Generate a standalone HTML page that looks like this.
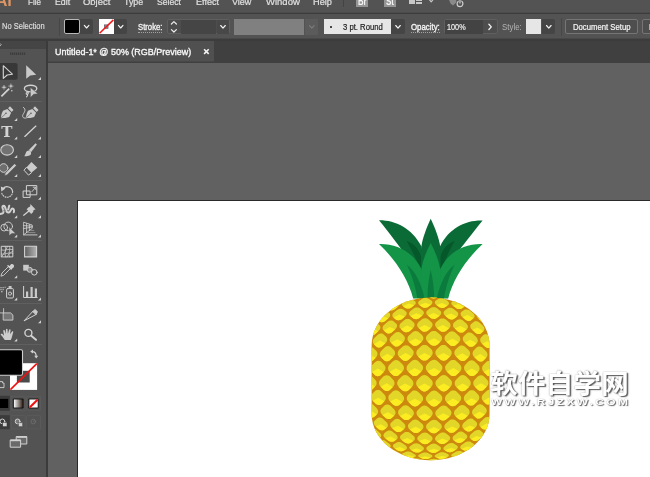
<!DOCTYPE html>
<html lang="en"><head><meta charset="utf-8"><title>Untitled-1* @ 50% (RGB/Preview)</title>
<style>
*{margin:0;padding:0;box-sizing:border-box}
html,body{width:650px;height:477px;overflow:hidden;background:#535353}
body{font-family:"Liberation Sans",sans-serif;position:relative}
#app{position:absolute;left:0;top:0;width:650px;height:477px;overflow:hidden;background:#535353}
.t{position:absolute;white-space:nowrap;transform-origin:0 0;line-height:normal;display:block}
.abs{position:absolute}
.ddn{position:absolute;background:#454545;border-radius:0 2px 2px 0}
svg{position:absolute;left:0;top:0;overflow:visible}
</style></head>
<body>
<div id="app">
<div class="abs" style="left:0;top:0;width:650px;height:13px;background:#535353"></div>
<span class="t" style="left:-4.6px;top:-9px;font-size:16.5px;font-weight:bold;color:#de9563;opacity:.999">Ai</span>
<span class="t" style="left:28.00px;top:-4.00px;font-size:9.4px;color:#e0e0e0;transform:scaleX(0.8583);-webkit-text-stroke:0.2px currentColor;">File</span>
<span class="t" style="left:55.00px;top:-4.00px;font-size:9.4px;color:#e0e0e0;transform:scaleX(0.9384);-webkit-text-stroke:0.2px currentColor;">Edit</span>
<span class="t" style="left:83.40px;top:-4.00px;font-size:9.4px;color:#e0e0e0;transform:scaleX(1.0086);-webkit-text-stroke:0.2px currentColor;">Object</span>
<span class="t" style="left:124.40px;top:-4.00px;font-size:9.4px;color:#e0e0e0;transform:scaleX(0.9422);-webkit-text-stroke:0.2px currentColor;">Type</span>
<span class="t" style="left:157.00px;top:-4.00px;font-size:9.4px;color:#e0e0e0;transform:scaleX(0.9187);-webkit-text-stroke:0.2px currentColor;">Select</span>
<span class="t" style="left:195.80px;top:-4.00px;font-size:9.4px;color:#e0e0e0;transform:scaleX(0.9723);-webkit-text-stroke:0.2px currentColor;">Effect</span>
<span class="t" style="left:232.00px;top:-4.00px;font-size:9.4px;color:#e0e0e0;transform:scaleX(0.9602);-webkit-text-stroke:0.2px currentColor;">View</span>
<span class="t" style="left:265.80px;top:-4.00px;font-size:9.4px;color:#e0e0e0;transform:scaleX(1.0140);-webkit-text-stroke:0.2px currentColor;">Window</span>
<span class="t" style="left:313.20px;top:-4.00px;font-size:9.4px;color:#e0e0e0;transform:scaleX(0.9828);-webkit-text-stroke:0.2px currentColor;">Help</span>
<div class="abs" style="left:342.5px;top:0;width:1px;height:7px;background:#444"></div>
<div class="abs" style="left:355.6px;top:-5px;width:12.5px;height:12.2px;background:#959595"></div>
<span class="t" style="left:357.60px;top:-5.00px;font-size:10.5px;color:#f4f4f4;font-weight:bold;transform:scaleX(0.7369);">Br</span>
<div class="abs" style="left:383.8px;top:-5px;width:12.4px;height:12.2px;background:#959595"></div>
<span class="t" style="left:386.20px;top:-5.00px;font-size:10.5px;color:#f4f4f4;font-weight:bold;transform:scaleX(0.7619);">St</span>
<div class="abs" style="left:409px;top:-3px;width:5.8px;height:7.3px;background:#c8c8c8"></div>
<div class="abs" style="left:415.9px;top:-3px;width:6px;height:4px;background:#c8c8c8"></div>
<div class="abs" style="left:415.9px;top:1.8px;width:6px;height:2.5px;background:#c8c8c8"></div>
<div class="abs" style="left:0;top:12px;width:650px;height:3px;background:#4b4b4b"></div><div class="abs" style="left:0;top:13px;width:650px;height:1px;background:#3c3c3c"></div>
<div class="abs" style="left:0;top:14px;width:650px;height:25px;background:#535353"></div>
<span class="t" style="left:2.20px;top:21.00px;font-size:9.0px;color:#dcdcdc;transform:scaleX(0.8348);-webkit-text-stroke:0.2px currentColor;">No Selection</span>
<div class="abs" style="left:59.4px;top:17.5px;width:1px;height:18.5px;background:#474747"></div>
<div class="abs" style="left:64.2px;top:18.8px;width:15.8px;height:15.6px;background:#000;border:1px solid #b8b8b8;border-radius:2px"></div>
<div class="ddn" style="left:80.4px;top:19.3px;width:12.2px;height:14.6px"></div>
<div class="abs" style="left:99px;top:19.3px;width:15px;height:14.6px;background:#fff"></div>
<div class="ddn" style="left:114.2px;top:19.3px;width:12.8px;height:14.6px"></div>
<span class="t" style="left:137.60px;top:22.00px;font-size:9.0px;color:#f4f4f4;transform:scaleX(0.8558);-webkit-text-stroke:0.35px currentColor;">Stroke:</span>
<div class="abs" style="left:137.6px;top:32px;width:24.4px;height:0;border-top:1px dotted #a2a2a2"></div>
<div class="abs" style="left:166.6px;top:19px;width:63.4px;height:15.4px;border:1px solid #5f5f5f;border-radius:2px;background:#4d4d4d"></div>
<div class="abs" style="left:181.2px;top:19.8px;width:34.4px;height:13.8px;background:#454545"></div>
<div class="abs" style="left:216.6px;top:19.8px;width:12.6px;height:13.8px;background:#484848"></div>
<div class="abs" style="left:234.3px;top:18.9px;width:70px;height:15.9px;background:#808080"></div>
<div class="abs" style="left:305.2px;top:18.9px;width:13.2px;height:15.9px;background:#5b5b5b"></div>
<div class="abs" style="left:323.8px;top:19.2px;width:67px;height:15.1px;background:#e6e6e6"></div>
<div class="abs" style="left:329.7px;top:25.6px;width:2.8px;height:2.8px;border-radius:50%;background:#111"></div>
<span class="t" style="left:342.90px;top:22.00px;font-size:9.0px;color:#1c1c1c;transform:scaleX(0.8554);-webkit-text-stroke:0.2px currentColor;">3 pt. Round</span>
<div class="ddn" style="left:391.4px;top:19.2px;width:13.2px;height:15.1px"></div>
<span class="t" style="left:410.80px;top:22.00px;font-size:9.0px;color:#f4f4f4;transform:scaleX(0.8725);-webkit-text-stroke:0.35px currentColor;">Opacity:</span>
<div class="abs" style="left:410.8px;top:32px;width:28.8px;height:0;border-top:1px dotted #a2a2a2"></div>
<div class="abs" style="left:444px;top:19px;width:53.6px;height:15.4px;border:1px solid #5f5f5f;border-radius:2px;background:#4d4d4d"></div>
<div class="abs" style="left:444.8px;top:19.8px;width:38.4px;height:13.8px;background:#434343"></div>
<span class="t" style="left:447.10px;top:22.00px;font-size:9.0px;color:#f0f0f0;transform:scaleX(0.8081);-webkit-text-stroke:0.2px currentColor;">100%</span>
<span class="t" style="left:501.80px;top:22.00px;font-size:9.0px;color:#b4b4b4;transform:scaleX(0.8752);">Style:</span>
<div class="abs" style="left:526.2px;top:19.3px;width:15.2px;height:14.8px;background:#e6e6e6"></div>
<div class="ddn" style="left:542px;top:19.3px;width:13.4px;height:14.8px"></div>
<div class="abs" style="left:560.5px;top:17.5px;width:1px;height:18.5px;background:#474747"></div>
<div class="abs" style="left:565px;top:19.2px;width:72.8px;height:15.1px;border:1px solid #757575;border-radius:2px;background:#4e4e4e"></div>
<span class="t" style="left:572.80px;top:22.00px;font-size:9.0px;color:#f6f6f6;transform:scaleX(0.8578);-webkit-text-stroke:0.2px currentColor;">Document Setup</span>
<div class="abs" style="left:641.8px;top:19.2px;width:62px;height:15.1px;border:1px solid #757575;border-radius:2px;background:#4e4e4e"></div>
<span class="t" style="left:648.60px;top:22.00px;font-size:9.0px;color:#f6f6f6;transform:scaleX(0.8578);-webkit-text-stroke:0.2px currentColor;">Preferences</span>
<svg width="650" height="477" viewBox="0 0 650 477"><path d="M84.3,25.4 L86.6,28.0 L88.89999999999999,25.4" fill="none" stroke="#f4f4f4" stroke-width="1.15" stroke-linecap="round" stroke-linejoin="round"/><path d="M118.4,25.4 L120.7,28.0 L123.0,25.4" fill="none" stroke="#f4f4f4" stroke-width="1.15" stroke-linecap="round" stroke-linejoin="round"/><path d="M220.7,25.5 L223,28.1 L225.3,25.5" fill="none" stroke="#f4f4f4" stroke-width="1.15" stroke-linecap="round" stroke-linejoin="round"/><path d="M309.5,25.599999999999998 L311.8,28.2 L314.1,25.599999999999998" fill="none" stroke="#7c7c7c" stroke-width="1.15" stroke-linecap="round" stroke-linejoin="round"/><path d="M395.7,25.5 L398,28.1 L400.3,25.5" fill="none" stroke="#f4f4f4" stroke-width="1.15" stroke-linecap="round" stroke-linejoin="round"/><path d="M546.5,25.5 L548.8,28.1 L551.0999999999999,25.5" fill="none" stroke="#f4f4f4" stroke-width="1.15" stroke-linecap="round" stroke-linejoin="round"/><path d="M429.2,-0.6 L431.2,1.7999999999999998 L433.2,-0.6" fill="none" stroke="#c8c8c8" stroke-width="1.15" stroke-linecap="round" stroke-linejoin="round"/><path d="M171.4,24 L173.9,21.6 L176.4,24 M171.4,29.6 L173.9,32 L176.4,29.6" fill="none" stroke="#ececec" stroke-width="1.2" stroke-linecap="round" stroke-linejoin="round"/><path d="M488.9,24.3 L491.3,26.9 L488.9,29.5" fill="none" stroke="#f4f4f4" stroke-width="1.3" stroke-linecap="round" stroke-linejoin="round"/><rect x="104.6" y="24.9" width="3.4" height="3.4" fill="#8a98a8" stroke="#4c5560" stroke-width="0.7"/><path d="M99.6,33.3 L113.4,19.9" stroke="#f01818" stroke-width="1.5"/><circle cx="460" cy="3.8" r="2.9" fill="none" stroke="#cdcdcd" stroke-width="1.2"/><path d="M460,-1 L460,3.4" stroke="#535353" stroke-width="2.6"/><path d="M460,-1 L460,3.4" stroke="#cdcdcd" stroke-width="1.2"/><path d="M448.6,-1 L456.4,-1 L456.2,2.6 L453,5.4 L450.6,3.6 Z" fill="#8a8a8a"/></svg>
<div class="abs" style="left:0;top:38px;width:650px;height:1px;background:#484848"></div><div class="abs" style="left:0;top:39px;width:650px;height:2px;background:#3c3c3c"></div>
<div class="abs" style="left:48px;top:41px;width:602px;height:22px;background:#404040"></div>
<div class="abs" style="left:48px;top:41px;width:166px;height:21px;background:linear-gradient(#505050 0,#505050 20px,#474747 20px)"></div>
<span class="t" style="left:55.20px;top:47.00px;font-size:9.2px;color:#f8f8f8;transform:scaleX(0.9756);-webkit-text-stroke:0.35px currentColor;">Untitled-1* @ 50% (RGB/Preview)</span>
<svg width="650" height="477" viewBox="0 0 650 477"><path d="M204.1,49.3 L208.7,53.9 M208.7,49.3 L204.1,53.9" stroke="#f4f4f4" stroke-width="1.6"/></svg>
<div class="abs" style="left:48px;top:63px;width:602px;height:414px;background:#616161"></div>
<div class="abs" style="left:76.9px;top:199.5px;width:580px;height:290px;background:#2a2a2a"></div>
<div class="abs" style="left:78.1px;top:200.8px;width:580px;height:290px;background:#fff"></div>
<svg width="650" height="477" viewBox="0 0 650 477"><defs><clipPath id="bodyclip"><path d="M371.6,345.9 C371.6,318.93 397.80,297.4 430.6,297.4 C463.40,297.4 489.6,318.93 489.6,345.9 L489.6,413.7 C489.6,439.55 463.40,460.2 430.6,460.2 C397.80,460.2 371.6,439.55 371.6,413.7 Z"/></clipPath></defs>
<path fill="#0b6b36" d="M379,220.2 C395,220 412,228 421.5,246.5 L424,262 L428,298 L414,298 L403.5,252 C400,247 390,234 379,220.2Z"/>
<path fill="#0b6b36" d="M482.6,220.6 C466,220 449,228 440,246.5 L437.5,262 L433.5,298 L447.6,298 L458.1,252 C461.6,247 471.6,234.4 482.6,220.6Z"/>
<path fill="#04582a" d="M406.4,240.8 C415.5,244 422.6,252 422.8,268.5 L423.5,277 C419,264 411.5,250 406.9,241.3Z"/>
<path fill="#04582a" d="M455,240.8 C446,244 438.9,252 438.7,268.5 L438,277 C442.5,264 450,250 454.5,241.3Z"/>
<path fill="#0b6b36" d="M430.7,218.8 C435,228 439,238 440.3,247 L441,298 L420.5,298 L421.3,247 C422.5,238 426.5,228 430.7,218.8Z"/>
<path fill="#139447" d="M379,244 C397,243.5 413,252 421.5,269 L428,298.6 L413.2,298.6 C408,278 394,258 379,244Z"/>
<path fill="#139447" d="M482.6,244 C464,243.5 448.5,252 440.2,269 L433.5,298.6 L448.2,298.6 C453.2,278 467.5,258 482.6,244Z"/>
<path fill="#139447" d="M430.7,243 C435.5,252 439,261 440.3,270 L442,298.6 L419.5,298.6 L421.3,270 C422.5,261 426,252 430.7,243Z"/>
<path fill="#0b7b3d" d="M406.8,264.8 C415,271 421,282 424.6,298.6 L417.3,298.6 C415.5,286 411.5,274 406.8,264.8Z"/>
<path fill="#0b7b3d" d="M454.6,264.8 C446.5,271 440.5,282 436.8,298.6 L444,298.6 C446,286 450,274 454.6,264.8Z"/>
<path fill="#0b7b3d" d="M430.7,270 C433,279 434,289 434.2,298.6 L427.4,298.6 C427.5,289 428.5,279 430.7,270Z"/>
<path d="M371.6,345.9 C371.6,318.93 397.80,297.4 430.6,297.4 C463.40,297.4 489.6,318.93 489.6,345.9 L489.6,413.7 C489.6,439.55 463.40,460.2 430.6,460.2 C397.80,460.2 371.6,439.55 371.6,413.7 Z" fill="#cd890e"/>
<g clip-path="url(#bodyclip)"><path fill="#e2d728" d="M380.6,292.0 L381.1,292.0 L381.4,292.0 L381.5,292.1 L381.3,292.4 L380.9,292.7 L380.3,293.0 L377.9,294.4 L377.2,294.8 L376.3,295.2 L375.5,295.6 L374.6,295.9 L373.9,296.1 L373.3,296.2 L371.5,296.5 L371.0,296.6 L370.8,296.5 L370.8,296.4 L370.9,296.2 L371.3,295.9 L371.8,295.6 L374.0,294.4 L374.6,294.0 L375.4,293.7 L376.3,293.4 L377.1,293.0 L377.9,292.7 L378.5,292.5ZM493.6,297.6 L494.1,298.0 L494.4,298.3 L494.6,298.5 L494.6,298.6 L494.4,298.6 L494.0,298.5 L492.2,298.1 L491.7,298.0 L491.0,297.8 L490.2,297.4 L489.3,297.0 L488.5,296.6 L487.8,296.2 L485.5,294.7 L484.9,294.3 L484.5,294.0 L484.4,293.8 L484.4,293.7 L484.7,293.7 L485.2,293.8 L487.1,294.3 L487.8,294.6 L488.5,294.9 L489.3,295.2 L490.1,295.6 L490.9,296.0 L491.5,296.4ZM373.3,297.2 L373.8,297.2 L374.0,297.4 L374.0,297.7 L373.7,298.1 L373.3,298.6 L372.7,299.1 L370.2,301.0 L369.4,301.5 L368.6,302.0 L367.7,302.4 L367.0,302.7 L366.3,302.9 L365.7,302.9 L364.2,302.9 L363.8,302.8 L363.7,302.7 L363.7,302.4 L364.0,302.0 L364.4,301.5 L365.0,301.0 L367.2,299.3 L367.9,298.9 L368.7,298.4 L369.5,298.0 L370.2,297.7 L371.0,297.4 L371.5,297.3ZM386.4,292.8 L386.9,292.9 L387.2,293.2 L387.3,293.5 L387.0,293.9 L386.6,294.4 L385.9,294.9 L383.3,296.6 L382.5,297.1 L381.6,297.5 L380.6,297.8 L379.7,298.0 L378.9,298.1 L378.3,298.1 L376.4,297.8 L376.0,297.6 L375.7,297.4 L375.7,297.1 L376.0,296.7 L376.4,296.2 L377.0,295.8 L379.5,294.2 L380.2,293.8 L381.1,293.4 L382.0,293.1 L382.9,292.9 L383.7,292.7 L384.3,292.7ZM488.7,297.5 L489.3,298.0 L489.7,298.4 L490.0,298.8 L490.0,299.1 L489.8,299.4 L489.4,299.5 L487.6,299.7 L487.0,299.7 L486.3,299.6 L485.4,299.4 L484.5,299.0 L483.6,298.5 L482.8,298.0 L480.2,296.3 L479.6,295.8 L479.1,295.3 L478.9,294.9 L478.9,294.5 L479.2,294.3 L479.6,294.2 L481.6,294.2 L482.3,294.3 L483.1,294.4 L483.9,294.7 L484.8,295.1 L485.6,295.5 L486.3,295.9ZM378.2,299.8 L378.7,300.1 L378.9,300.5 L378.9,301.0 L378.6,301.6 L378.1,302.2 L377.4,302.8 L374.6,305.0 L373.8,305.6 L372.9,306.1 L372.0,306.5 L371.1,306.7 L370.3,306.7 L369.8,306.6 L368.0,305.9 L367.7,305.7 L367.5,305.3 L367.6,304.8 L367.9,304.2 L368.4,303.6 L369.0,303.1 L371.6,301.0 L372.4,300.5 L373.2,300.0 L374.1,299.7 L375.0,299.4 L375.7,299.3 L376.3,299.3ZM392.4,296.3 L392.9,296.6 L393.2,297.1 L393.2,297.6 L392.9,298.2 L392.5,298.8 L391.7,299.4 L388.9,301.5 L388.0,302.0 L387.0,302.5 L386.0,302.8 L385.1,302.9 L384.2,302.9 L383.5,302.7 L381.5,301.7 L381.0,301.4 L380.8,301.0 L380.8,300.4 L381.1,299.9 L381.5,299.3 L382.2,298.7 L384.9,296.8 L385.8,296.3 L386.7,295.9 L387.6,295.6 L388.6,295.5 L389.4,295.4 L390.2,295.6ZM407.5,294.0 L408.1,294.4 L408.4,294.8 L408.5,295.4 L408.3,296.0 L407.8,296.6 L407.1,297.2 L404.2,299.1 L403.3,299.6 L402.3,300.0 L401.2,300.2 L400.2,300.3 L399.3,300.1 L398.5,299.8 L396.1,298.6 L395.6,298.3 L395.3,297.8 L395.3,297.2 L395.5,296.6 L396.0,296.1 L396.7,295.5 L399.5,293.8 L400.3,293.4 L401.3,293.0 L402.3,292.8 L403.3,292.7 L404.2,292.8 L405.0,293.0ZM423.2,292.8 L423.8,293.3 L424.2,293.8 L424.4,294.4 L424.2,295.0 L423.8,295.5 L423.1,296.1 L420.3,297.8 L419.4,298.3 L418.3,298.6 L417.2,298.7 L416.1,298.7 L415.1,298.5 L414.3,298.2 L411.7,296.7 L411.1,296.3 L410.8,295.8 L410.7,295.2 L410.9,294.6 L411.3,294.0 L412.0,293.5 L414.8,292.0 L415.7,291.6 L416.7,291.3 L417.7,291.2 L418.8,291.2 L419.7,291.3 L420.6,291.6ZM439.1,292.9 L439.8,293.4 L440.2,293.9 L440.4,294.5 L440.3,295.1 L439.9,295.6 L439.2,296.1 L436.5,297.7 L435.7,298.1 L434.7,298.3 L433.6,298.4 L432.4,298.3 L431.4,298.0 L430.5,297.6 L427.8,296.0 L427.1,295.5 L426.7,294.9 L426.6,294.3 L426.7,293.7 L427.2,293.2 L427.8,292.7 L430.5,291.4 L431.4,291.1 L432.4,290.9 L433.4,290.8 L434.5,290.9 L435.5,291.1 L436.4,291.4ZM454.8,294.1 L455.5,294.6 L456.0,295.2 L456.2,295.8 L456.1,296.4 L455.8,296.9 L455.2,297.3 L452.7,298.6 L451.9,299.0 L450.9,299.1 L449.8,299.1 L448.7,299.0 L447.7,298.6 L446.8,298.2 L443.9,296.3 L443.2,295.8 L442.8,295.2 L442.6,294.6 L442.7,294.0 L443.1,293.5 L443.7,293.1 L446.3,292.0 L447.1,291.7 L448.1,291.6 L449.1,291.6 L450.2,291.8 L451.1,292.1 L452.0,292.5ZM469.9,296.5 L470.5,297.1 L471.0,297.7 L471.3,298.2 L471.3,298.8 L471.0,299.3 L470.5,299.6 L468.2,300.7 L467.5,301.0 L466.6,301.1 L465.6,301.0 L464.5,300.8 L463.5,300.4 L462.6,299.8 L459.7,297.9 L459.0,297.3 L458.5,296.7 L458.3,296.1 L458.4,295.5 L458.7,295.0 L459.3,294.7 L461.6,293.8 L462.4,293.6 L463.3,293.6 L464.3,293.7 L465.3,293.9 L466.3,294.3 L467.1,294.7ZM483.9,300.1 L484.6,300.7 L485.1,301.3 L485.3,301.9 L485.4,302.4 L485.2,302.8 L484.7,303.1 L482.8,303.9 L482.2,304.1 L481.3,304.1 L480.4,304.0 L479.4,303.7 L478.5,303.2 L477.6,302.6 L474.8,300.5 L474.1,299.9 L473.6,299.3 L473.3,298.7 L473.3,298.2 L473.6,297.7 L474.1,297.5 L476.2,296.8 L476.9,296.7 L477.7,296.7 L478.6,296.9 L479.5,297.3 L480.4,297.7 L481.2,298.2ZM496.5,304.9 L497.2,305.5 L497.7,306.1 L498.0,306.7 L498.1,307.1 L497.9,307.5 L497.6,307.7 L496.0,308.3 L495.5,308.4 L494.8,308.3 L494.0,308.1 L493.1,307.7 L492.2,307.2 L491.4,306.5 L488.7,304.3 L488.0,303.7 L487.5,303.0 L487.2,302.5 L487.1,302.0 L487.3,301.6 L487.7,301.4 L489.5,301.0 L490.1,301.0 L490.8,301.1 L491.6,301.4 L492.5,301.8 L493.3,302.3 L494.1,302.9ZM383.5,305.2 L383.9,305.6 L384.2,306.2 L384.2,306.9 L383.9,307.6 L383.3,308.4 L382.6,309.2 L379.6,311.6 L378.7,312.3 L377.7,312.8 L376.7,313.1 L375.8,313.2 L374.9,313.1 L374.3,312.8 L372.4,311.6 L371.9,311.1 L371.8,310.6 L371.8,309.9 L372.1,309.2 L372.7,308.4 L373.4,307.7 L376.2,305.4 L377.0,304.8 L378.0,304.4 L378.9,304.0 L379.9,303.9 L380.7,303.9 L381.4,304.1ZM398.7,302.5 L399.2,303.0 L399.6,303.6 L399.6,304.4 L399.3,305.2 L398.8,305.9 L398.1,306.6 L395.1,309.0 L394.1,309.6 L393.1,310.1 L392.0,310.3 L391.0,310.4 L390.0,310.2 L389.3,309.9 L387.0,308.3 L386.5,307.8 L386.2,307.2 L386.2,306.5 L386.5,305.7 L387.0,305.0 L387.8,304.3 L390.7,302.1 L391.6,301.6 L392.6,301.1 L393.6,300.9 L394.6,300.8 L395.5,300.9 L396.3,301.2ZM414.7,300.9 L415.3,301.5 L415.7,302.2 L415.8,302.9 L415.6,303.7 L415.2,304.5 L414.4,305.1 L411.4,307.4 L410.5,308.0 L409.4,308.4 L408.3,308.6 L407.2,308.5 L406.2,308.3 L405.3,307.9 L402.8,306.1 L402.2,305.5 L401.9,304.9 L401.8,304.1 L402.0,303.3 L402.5,302.6 L403.3,302.0 L406.2,299.9 L407.1,299.4 L408.1,299.0 L409.2,298.8 L410.3,298.8 L411.3,299.0 L412.1,299.4ZM431.2,300.4 L431.9,301.0 L432.3,301.7 L432.4,302.5 L432.3,303.3 L431.9,304.0 L431.2,304.7 L428.3,306.7 L427.4,307.3 L426.3,307.6 L425.2,307.7 L424.0,307.7 L423.0,307.4 L422.1,306.9 L419.3,304.9 L418.6,304.3 L418.2,303.6 L418.1,302.8 L418.3,302.0 L418.8,301.3 L419.5,300.7 L422.4,298.8 L423.2,298.3 L424.3,298.0 L425.4,297.9 L426.5,298.0 L427.5,298.2 L428.4,298.7ZM447.6,301.0 L448.3,301.7 L448.8,302.4 L449.0,303.1 L448.9,303.9 L448.6,304.6 L447.9,305.2 L445.2,307.1 L444.3,307.6 L443.3,307.9 L442.2,307.9 L441.0,307.8 L439.9,307.4 L439.0,306.9 L436.1,304.7 L435.4,304.1 L434.9,303.3 L434.8,302.5 L434.9,301.8 L435.3,301.1 L436.0,300.5 L438.7,298.8 L439.6,298.4 L440.6,298.2 L441.7,298.1 L442.8,298.3 L443.8,298.6 L444.7,299.1ZM463.6,302.7 L464.4,303.3 L464.9,304.1 L465.1,304.8 L465.1,305.6 L464.8,306.2 L464.2,306.8 L461.8,308.5 L460.9,308.9 L460.0,309.1 L458.9,309.1 L457.8,308.9 L456.7,308.4 L455.7,307.8 L452.7,305.6 L452.0,304.9 L451.5,304.1 L451.3,303.3 L451.4,302.6 L451.7,301.9 L452.3,301.4 L454.9,299.9 L455.7,299.6 L456.7,299.4 L457.7,299.4 L458.8,299.7 L459.8,300.0 L460.7,300.6ZM478.8,305.4 L479.5,306.1 L480.0,306.8 L480.3,307.6 L480.3,308.3 L480.1,308.9 L479.6,309.4 L477.5,310.8 L476.8,311.2 L475.9,311.3 L474.8,311.2 L473.8,310.9 L472.7,310.5 L471.8,309.8 L468.8,307.4 L468.1,306.7 L467.6,305.9 L467.3,305.2 L467.3,304.4 L467.6,303.8 L468.1,303.4 L470.4,302.1 L471.1,301.8 L472.0,301.8 L473.0,301.9 L474.0,302.2 L475.0,302.6 L475.9,303.2ZM492.7,309.2 L493.4,309.9 L493.9,310.7 L494.2,311.4 L494.3,312.0 L494.2,312.6 L493.8,313.0 L492.0,314.2 L491.4,314.4 L490.6,314.5 L489.7,314.3 L488.7,314.0 L487.7,313.5 L486.8,312.8 L483.9,310.3 L483.2,309.6 L482.6,308.8 L482.3,308.1 L482.3,307.4 L482.5,306.8 L483.0,306.4 L484.9,305.4 L485.5,305.2 L486.3,305.2 L487.2,305.4 L488.2,305.8 L489.1,306.3 L489.9,306.9ZM374.1,315.9 L374.5,316.5 L374.7,317.2 L374.7,318.0 L374.4,318.9 L373.8,319.7 L373.0,320.6 L370.0,323.3 L369.1,324.1 L368.1,324.6 L367.1,324.9 L366.2,325.0 L365.4,324.9 L364.7,324.5 L362.9,322.9 L362.5,322.4 L362.4,321.8 L362.5,321.0 L362.8,320.1 L363.4,319.3 L364.1,318.5 L367.0,315.9 L367.8,315.2 L368.8,314.6 L369.7,314.3 L370.7,314.1 L371.5,314.2 L372.1,314.5ZM389.3,313.1 L389.9,313.7 L390.1,314.5 L390.2,315.3 L389.9,316.3 L389.3,317.2 L388.6,318.0 L385.5,320.7 L384.5,321.4 L383.4,321.9 L382.3,322.2 L381.3,322.2 L380.4,322.0 L379.6,321.6 L377.4,319.7 L376.9,319.1 L376.7,318.4 L376.7,317.6 L377.1,316.7 L377.6,315.8 L378.4,315.0 L381.4,312.4 L382.3,311.8 L383.3,311.3 L384.3,311.0 L385.3,310.9 L386.3,311.1 L387.0,311.4ZM405.6,311.3 L406.3,311.9 L406.6,312.7 L406.7,313.6 L406.5,314.6 L405.9,315.5 L405.2,316.3 L402.1,318.9 L401.1,319.6 L400.0,320.0 L398.8,320.3 L397.7,320.2 L396.7,320.0 L395.8,319.5 L393.3,317.4 L392.7,316.7 L392.4,315.9 L392.4,315.0 L392.7,314.1 L393.2,313.3 L394.0,312.5 L397.0,310.0 L398.0,309.4 L399.0,308.9 L400.1,308.7 L401.2,308.7 L402.2,308.9 L403.0,309.3ZM422.6,310.4 L423.3,311.1 L423.7,311.9 L423.9,312.8 L423.7,313.7 L423.2,314.6 L422.5,315.4 L419.4,317.9 L418.4,318.6 L417.3,319.0 L416.1,319.2 L414.9,319.1 L413.9,318.8 L413.0,318.2 L410.2,315.9 L409.5,315.2 L409.1,314.4 L409.1,313.5 L409.3,312.5 L409.8,311.7 L410.5,310.9 L413.6,308.5 L414.5,308.0 L415.6,307.6 L416.7,307.4 L417.8,307.5 L418.9,307.7 L419.8,308.2ZM439.8,310.4 L440.5,311.1 L441.0,312.0 L441.2,312.9 L441.1,313.8 L440.6,314.7 L440.0,315.4 L437.0,317.8 L436.1,318.4 L435.0,318.8 L433.8,318.9 L432.6,318.8 L431.5,318.4 L430.5,317.8 L427.6,315.3 L426.8,314.6 L426.4,313.7 L426.3,312.8 L426.4,311.8 L426.9,311.0 L427.6,310.3 L430.5,308.0 L431.5,307.5 L432.5,307.2 L433.7,307.1 L434.8,307.2 L435.9,307.6 L436.8,308.1ZM456.7,311.4 L457.5,312.1 L458.0,313.0 L458.2,313.9 L458.2,314.8 L457.8,315.7 L457.2,316.4 L454.5,318.6 L453.6,319.1 L452.6,319.4 L451.4,319.5 L450.2,319.3 L449.1,318.8 L448.1,318.2 L445.0,315.6 L444.3,314.8 L443.8,313.9 L443.6,313.0 L443.7,312.1 L444.1,311.3 L444.8,310.6 L447.5,308.5 L448.4,308.1 L449.4,307.8 L450.5,307.8 L451.7,308.0 L452.7,308.4 L453.7,308.9ZM473.0,313.3 L473.8,314.1 L474.3,314.9 L474.6,315.8 L474.6,316.7 L474.3,317.5 L473.8,318.1 L471.3,320.1 L470.5,320.6 L469.5,320.9 L468.4,320.9 L467.3,320.6 L466.2,320.1 L465.2,319.5 L462.1,316.8 L461.3,316.0 L460.8,315.1 L460.6,314.1 L460.6,313.2 L461.0,312.5 L461.6,311.8 L464.1,310.0 L464.9,309.6 L465.8,309.4 L466.9,309.4 L468.0,309.7 L469.0,310.1 L470.0,310.8ZM488.1,316.2 L488.9,317.0 L489.5,317.8 L489.8,318.7 L489.8,319.5 L489.6,320.2 L489.2,320.8 L487.1,322.5 L486.4,323.0 L485.5,323.1 L484.5,323.1 L483.4,322.8 L482.4,322.3 L481.5,321.6 L478.4,318.8 L477.6,318.0 L477.1,317.1 L476.8,316.2 L476.8,315.3 L477.0,314.6 L477.5,314.0 L479.7,312.4 L480.4,312.1 L481.3,312.0 L482.3,312.1 L483.3,312.4 L484.3,312.9 L485.2,313.6ZM379.6,325.3 L380.1,326.0 L380.4,326.9 L380.4,327.8 L380.1,328.9 L379.5,329.9 L378.7,330.8 L375.6,333.7 L374.7,334.5 L373.6,335.0 L372.5,335.3 L371.5,335.3 L370.6,335.0 L369.8,334.5 L367.7,332.4 L367.2,331.7 L367.0,330.9 L367.0,330.0 L367.4,329.0 L367.9,328.0 L368.7,327.2 L371.7,324.3 L372.6,323.6 L373.6,323.1 L374.7,322.8 L375.7,322.7 L376.6,322.9 L377.3,323.3ZM396.0,323.4 L396.7,324.1 L397.0,325.0 L397.1,326.1 L396.8,327.1 L396.3,328.1 L395.5,329.0 L392.3,332.0 L391.3,332.7 L390.2,333.2 L389.0,333.4 L387.9,333.4 L386.8,333.1 L386.0,332.5 L383.5,330.2 L382.9,329.4 L382.6,328.5 L382.6,327.5 L382.9,326.5 L383.5,325.6 L384.3,324.7 L387.4,321.9 L388.3,321.2 L389.4,320.7 L390.5,320.4 L391.6,320.4 L392.6,320.7 L393.5,321.2ZM413.4,322.2 L414.1,323.0 L414.5,324.0 L414.6,325.0 L414.4,326.1 L413.9,327.1 L413.1,328.0 L409.9,330.9 L408.9,331.6 L407.8,332.1 L406.6,332.3 L405.4,332.2 L404.3,331.8 L403.3,331.2 L400.5,328.6 L399.9,327.9 L399.5,326.9 L399.5,325.9 L399.7,324.8 L400.2,323.8 L401.0,323.0 L404.2,320.2 L405.2,319.6 L406.3,319.1 L407.4,318.9 L408.6,319.0 L409.7,319.3 L410.6,319.8ZM431.2,321.9 L432.0,322.7 L432.4,323.7 L432.6,324.7 L432.4,325.8 L432.0,326.8 L431.2,327.7 L428.1,330.4 L427.1,331.1 L426.0,331.6 L424.7,331.7 L423.5,331.6 L422.4,331.2 L421.4,330.5 L418.4,327.8 L417.7,327.0 L417.2,326.0 L417.1,324.9 L417.3,323.9 L417.8,322.9 L418.6,322.1 L421.7,319.4 L422.6,318.8 L423.8,318.4 L425.0,318.2 L426.1,318.3 L427.2,318.7 L428.2,319.3ZM449.0,322.3 L449.8,323.1 L450.3,324.1 L450.5,325.2 L450.4,326.2 L450.0,327.2 L449.3,328.0 L446.4,330.7 L445.4,331.3 L444.3,331.7 L443.1,331.8 L441.8,331.7 L440.7,331.2 L439.7,330.5 L436.5,327.7 L435.8,326.8 L435.3,325.8 L435.1,324.8 L435.3,323.7 L435.7,322.7 L436.4,321.9 L439.4,319.4 L440.3,318.8 L441.4,318.5 L442.6,318.4 L443.8,318.5 L444.9,319.0 L445.9,319.6ZM466.3,323.5 L467.1,324.4 L467.7,325.4 L467.9,326.4 L467.9,327.4 L467.5,328.3 L466.9,329.1 L464.2,331.6 L463.3,332.2 L462.3,332.5 L461.1,332.6 L459.9,332.4 L458.7,331.9 L457.7,331.2 L454.5,328.3 L453.7,327.4 L453.2,326.4 L453.0,325.3 L453.1,324.3 L453.5,323.3 L454.1,322.6 L456.9,320.2 L457.8,319.7 L458.8,319.4 L459.9,319.3 L461.1,319.6 L462.2,320.0 L463.2,320.7ZM482.7,325.5 L483.5,326.4 L484.1,327.3 L484.4,328.3 L484.4,329.3 L484.1,330.2 L483.6,330.9 L481.2,333.2 L480.4,333.7 L479.4,334.0 L478.3,334.0 L477.1,333.8 L476.0,333.3 L475.1,332.5 L471.9,329.6 L471.1,328.7 L470.5,327.7 L470.3,326.6 L470.3,325.6 L470.6,324.7 L471.2,324.0 L473.7,321.9 L474.5,321.4 L475.5,321.1 L476.5,321.2 L477.6,321.4 L478.7,322.0 L479.6,322.7ZM497.7,328.3 L498.5,329.1 L499.1,330.1 L499.4,331.0 L499.5,331.9 L499.3,332.8 L498.9,333.4 L496.8,335.4 L496.1,335.9 L495.3,336.1 L494.3,336.1 L493.2,335.8 L492.2,335.3 L491.3,334.5 L488.2,331.6 L487.4,330.7 L486.9,329.7 L486.5,328.7 L486.5,327.7 L486.8,326.9 L487.3,326.2 L489.4,324.3 L490.1,323.9 L490.9,323.7 L491.9,323.8 L492.9,324.2 L493.9,324.7 L494.8,325.4ZM386.2,336.8 L386.8,337.7 L387.1,338.6 L387.2,339.7 L386.9,340.9 L386.4,342.0 L385.6,342.9 L382.4,346.0 L381.4,346.8 L380.3,347.3 L379.2,347.5 L378.0,347.5 L377.0,347.1 L376.2,346.5 L373.7,344.0 L373.1,343.1 L372.8,342.2 L372.8,341.1 L373.1,340.0 L373.6,339.0 L374.4,338.0 L377.5,335.0 L378.5,334.3 L379.6,333.8 L380.7,333.5 L381.8,333.5 L382.8,333.8 L383.6,334.4ZM403.7,335.6 L404.4,336.5 L404.8,337.6 L404.9,338.7 L404.7,339.8 L404.2,340.9 L403.4,341.9 L400.1,345.0 L399.1,345.8 L398.0,346.3 L396.7,346.5 L395.5,346.4 L394.4,346.0 L393.5,345.3 L390.7,342.6 L390.0,341.7 L389.7,340.7 L389.6,339.6 L389.9,338.4 L390.4,337.4 L391.2,336.4 L394.4,333.4 L395.4,332.7 L396.5,332.2 L397.7,332.0 L398.9,332.0 L400.0,332.4 L400.9,333.0ZM422.0,335.1 L422.7,336.0 L423.2,337.0 L423.4,338.2 L423.2,339.4 L422.7,340.5 L421.9,341.4 L418.6,344.5 L417.6,345.2 L416.4,345.7 L415.2,345.9 L413.9,345.7 L412.8,345.3 L411.8,344.6 L408.7,341.7 L408.0,340.8 L407.6,339.7 L407.5,338.6 L407.7,337.4 L408.2,336.3 L409.0,335.4 L412.2,332.5 L413.2,331.7 L414.4,331.3 L415.6,331.1 L416.8,331.2 L418.0,331.6 L418.9,332.3ZM440.5,335.1 L441.3,336.0 L441.8,337.1 L442.0,338.3 L441.8,339.4 L441.4,340.5 L440.6,341.4 L437.5,344.4 L436.5,345.1 L435.3,345.6 L434.0,345.7 L432.7,345.6 L431.5,345.1 L430.5,344.4 L427.3,341.4 L426.6,340.4 L426.1,339.3 L425.9,338.2 L426.1,337.0 L426.6,335.9 L427.4,335.0 L430.5,332.1 L431.5,331.4 L432.7,331.0 L433.9,330.9 L435.1,331.0 L436.3,331.5 L437.3,332.2ZM458.7,335.7 L459.5,336.6 L460.0,337.7 L460.3,338.9 L460.2,340.0 L459.8,341.1 L459.1,342.0 L456.1,344.8 L455.1,345.5 L454.0,345.9 L452.8,346.0 L451.5,345.9 L450.3,345.4 L449.3,344.6 L446.0,341.5 L445.2,340.6 L444.7,339.5 L444.5,338.3 L444.7,337.2 L445.1,336.1 L445.8,335.2 L448.8,332.5 L449.8,331.8 L450.9,331.4 L452.1,331.3 L453.3,331.5 L454.5,332.0 L455.5,332.7ZM476.2,336.9 L477.0,337.9 L477.5,338.9 L477.8,340.1 L477.8,341.2 L477.4,342.2 L476.8,343.0 L474.1,345.7 L473.2,346.3 L472.1,346.7 L470.9,346.8 L469.7,346.6 L468.6,346.1 L467.6,345.3 L464.3,342.2 L463.5,341.3 L463.0,340.2 L462.8,339.0 L462.8,337.9 L463.2,336.9 L463.9,336.0 L466.7,333.4 L467.5,332.8 L468.6,332.5 L469.7,332.4 L470.9,332.7 L472.0,333.2 L473.0,333.9ZM492.5,338.8 L493.3,339.7 L493.8,340.7 L494.1,341.8 L494.1,342.8 L493.8,343.8 L493.3,344.6 L490.9,347.1 L490.1,347.7 L489.2,348.0 L488.1,348.0 L486.9,347.8 L485.9,347.3 L484.9,346.5 L481.8,343.4 L481.0,342.5 L480.4,341.4 L480.2,340.3 L480.2,339.2 L480.5,338.2 L481.1,337.4 L483.5,335.0 L484.3,334.5 L485.3,334.2 L486.3,334.2 L487.4,334.5 L488.5,335.0 L489.4,335.8ZM376.4,351.1 L377.0,351.9 L377.4,353.0 L377.5,354.1 L377.2,355.3 L376.7,356.4 L375.9,357.4 L372.9,360.5 L371.9,361.3 L370.9,361.8 L369.7,362.0 L368.6,361.9 L367.6,361.5 L366.8,360.9 L364.3,358.2 L363.7,357.3 L363.4,356.3 L363.3,355.2 L363.6,354.0 L364.1,353.0 L364.8,352.0 L367.8,349.0 L368.8,348.2 L369.8,347.7 L370.9,347.4 L372.0,347.5 L373.0,347.8 L373.8,348.4ZM393.9,350.1 L394.6,351.0 L395.0,352.1 L395.1,353.3 L394.9,354.5 L394.4,355.6 L393.6,356.6 L390.4,359.8 L389.4,360.6 L388.2,361.1 L387.0,361.3 L385.8,361.2 L384.7,360.8 L383.8,360.1 L381.0,357.2 L380.3,356.2 L379.9,355.2 L379.8,354.0 L380.1,352.8 L380.6,351.7 L381.4,350.7 L384.6,347.6 L385.5,346.8 L386.7,346.3 L387.9,346.1 L389.0,346.2 L390.1,346.6 L391.0,347.2ZM412.3,349.5 L413.1,350.4 L413.6,351.6 L413.7,352.8 L413.5,354.0 L413.0,355.2 L412.2,356.2 L408.9,359.4 L407.9,360.2 L406.7,360.7 L405.4,360.9 L404.1,360.7 L403.0,360.3 L402.0,359.5 L398.9,356.5 L398.2,355.5 L397.8,354.4 L397.7,353.2 L397.9,352.0 L398.4,350.8 L399.2,349.8 L402.5,346.7 L403.5,345.9 L404.7,345.4 L405.9,345.2 L407.1,345.4 L408.3,345.8 L409.3,346.5ZM431.3,349.3 L432.0,350.3 L432.5,351.4 L432.7,352.6 L432.5,353.9 L432.1,355.0 L431.3,356.0 L428.0,359.2 L427.0,360.0 L425.7,360.5 L424.5,360.6 L423.2,360.5 L422.0,360.0 L420.9,359.2 L417.7,356.1 L416.9,355.1 L416.5,354.0 L416.3,352.7 L416.5,351.5 L417.0,350.4 L417.8,349.4 L421.1,346.3 L422.1,345.5 L423.3,345.0 L424.6,344.9 L425.8,345.0 L427.0,345.5 L428.0,346.2ZM450.2,349.5 L451.0,350.5 L451.5,351.6 L451.7,352.9 L451.5,354.1 L451.1,355.2 L450.3,356.2 L447.2,359.3 L446.1,360.1 L445.0,360.5 L443.7,360.7 L442.4,360.5 L441.2,360.0 L440.1,359.2 L436.8,356.1 L436.0,355.1 L435.5,353.9 L435.4,352.7 L435.5,351.4 L436.0,350.3 L436.8,349.3 L440.0,346.3 L441.0,345.5 L442.1,345.1 L443.4,344.9 L444.7,345.1 L445.9,345.6 L446.9,346.4ZM468.5,350.1 L469.3,351.1 L469.9,352.2 L470.1,353.4 L470.0,354.6 L469.6,355.7 L468.9,356.7 L465.9,359.7 L464.9,360.4 L463.8,360.9 L462.5,361.0 L461.3,360.8 L460.1,360.3 L459.1,359.5 L455.8,356.3 L455.0,355.3 L454.5,354.2 L454.3,352.9 L454.4,351.7 L454.9,350.6 L455.6,349.6 L458.6,346.7 L459.6,346.0 L460.7,345.6 L461.9,345.5 L463.1,345.7 L464.3,346.2 L465.3,347.0ZM486.0,351.2 L486.7,352.1 L487.2,353.2 L487.5,354.4 L487.4,355.5 L487.1,356.6 L486.4,357.5 L483.7,360.3 L482.8,361.0 L481.8,361.4 L480.6,361.5 L479.4,361.3 L478.3,360.8 L477.3,360.1 L474.1,356.9 L473.3,355.9 L472.8,354.8 L472.6,353.6 L472.7,352.4 L473.1,351.3 L473.7,350.4 L476.5,347.6 L477.4,347.0 L478.4,346.6 L479.6,346.5 L480.8,346.8 L481.9,347.3 L482.8,348.0ZM501.9,352.6 L502.6,353.5 L503.1,354.6 L503.4,355.7 L503.4,356.8 L503.1,357.8 L502.5,358.6 L500.1,361.2 L499.4,361.9 L498.4,362.2 L497.3,362.3 L496.2,362.1 L495.2,361.6 L494.3,360.9 L491.3,357.8 L490.6,356.8 L490.0,355.7 L489.8,354.5 L489.9,353.4 L490.2,352.4 L490.8,351.5 L493.2,349.0 L494.0,348.4 L495.0,348.0 L496.0,348.0 L497.1,348.3 L498.1,348.8 L499.0,349.6ZM384.3,364.9 L385.0,365.9 L385.4,367.0 L385.5,368.3 L385.3,369.5 L384.8,370.6 L384.1,371.6 L381.0,374.8 L380.1,375.5 L379.0,376.0 L377.8,376.2 L376.6,376.0 L375.5,375.6 L374.6,374.8 L371.8,371.8 L371.1,370.9 L370.7,369.8 L370.6,368.6 L370.8,367.4 L371.3,366.3 L372.0,365.3 L375.0,362.2 L376.0,361.5 L377.1,361.0 L378.2,360.8 L379.4,360.9 L380.5,361.3 L381.4,362.0ZM402.6,364.6 L403.3,365.5 L403.8,366.7 L404.0,368.0 L403.8,369.2 L403.3,370.4 L402.5,371.4 L399.3,374.6 L398.2,375.4 L397.1,375.9 L395.8,376.1 L394.6,375.9 L393.4,375.4 L392.4,374.7 L389.3,371.6 L388.6,370.6 L388.2,369.4 L388.0,368.2 L388.2,367.0 L388.7,365.8 L389.5,364.8 L392.7,361.6 L393.7,360.8 L394.9,360.3 L396.1,360.1 L397.3,360.3 L398.5,360.7 L399.5,361.5ZM421.6,364.4 L422.4,365.4 L422.9,366.6 L423.1,367.8 L422.9,369.1 L422.4,370.3 L421.6,371.3 L418.3,374.6 L417.3,375.4 L416.0,375.9 L414.7,376.0 L413.5,375.9 L412.3,375.4 L411.2,374.6 L408.0,371.4 L407.2,370.4 L406.7,369.2 L406.6,367.9 L406.8,366.7 L407.3,365.5 L408.1,364.5 L411.4,361.3 L412.4,360.5 L413.6,360.0 L414.9,359.8 L416.2,359.9 L417.4,360.4 L418.4,361.2ZM440.9,364.4 L441.7,365.4 L442.2,366.6 L442.4,367.9 L442.2,369.1 L441.7,370.3 L440.9,371.3 L437.7,374.6 L436.6,375.4 L435.4,375.9 L434.1,376.0 L432.8,375.9 L431.6,375.4 L430.5,374.6 L427.2,371.3 L426.4,370.3 L425.9,369.1 L425.8,367.8 L425.9,366.6 L426.4,365.4 L427.2,364.3 L430.5,361.1 L431.6,360.4 L432.8,359.9 L434.1,359.7 L435.4,359.9 L436.6,360.4 L437.6,361.2ZM459.9,364.6 L460.7,365.6 L461.2,366.8 L461.4,368.0 L461.3,369.3 L460.8,370.4 L460.0,371.4 L456.8,374.6 L455.8,375.4 L454.6,375.9 L453.4,376.1 L452.1,375.9 L450.9,375.4 L449.8,374.6 L446.6,371.4 L445.8,370.3 L445.3,369.1 L445.1,367.9 L445.2,366.6 L445.7,365.4 L446.5,364.4 L449.7,361.3 L450.7,360.5 L451.9,360.0 L453.2,359.9 L454.4,360.1 L455.6,360.6 L456.7,361.4ZM478.2,365.0 L478.9,366.0 L479.4,367.1 L479.6,368.3 L479.5,369.6 L479.1,370.7 L478.3,371.7 L475.3,374.7 L474.4,375.5 L473.2,376.0 L472.0,376.1 L470.8,375.9 L469.6,375.5 L468.6,374.7 L465.5,371.5 L464.7,370.5 L464.2,369.3 L464.0,368.1 L464.1,366.8 L464.6,365.7 L465.3,364.7 L468.4,361.6 L469.3,360.9 L470.5,360.5 L471.7,360.3 L472.9,360.5 L474.0,361.0 L475.0,361.8ZM495.2,365.6 L495.9,366.5 L496.4,367.6 L496.6,368.8 L496.5,370.0 L496.1,371.0 L495.4,372.0 L492.7,374.9 L491.8,375.6 L490.7,376.1 L489.6,376.2 L488.5,376.1 L487.4,375.6 L486.5,374.8 L483.5,371.7 L482.7,370.8 L482.3,369.6 L482.1,368.4 L482.2,367.2 L482.6,366.1 L483.3,365.1 L486.1,362.2 L486.9,361.5 L488.0,361.1 L489.1,361.0 L490.2,361.2 L491.3,361.8 L492.2,362.5ZM375.2,379.7 L376.0,380.7 L376.4,381.8 L376.6,383.0 L376.5,384.2 L376.0,385.4 L375.3,386.3 L372.5,389.3 L371.6,390.0 L370.6,390.4 L369.5,390.5 L368.4,390.3 L367.3,389.8 L366.4,389.1 L363.5,386.1 L362.9,385.1 L362.4,384.0 L362.2,382.9 L362.4,381.7 L362.8,380.6 L363.4,379.7 L366.2,376.7 L367.1,376.0 L368.1,375.5 L369.3,375.4 L370.4,375.5 L371.4,376.0 L372.3,376.7ZM393.1,379.8 L393.9,380.8 L394.4,381.9 L394.5,383.2 L394.4,384.4 L393.9,385.6 L393.2,386.6 L390.1,389.7 L389.1,390.4 L388.0,390.9 L386.8,391.0 L385.6,390.8 L384.5,390.3 L383.5,389.5 L380.4,386.4 L379.7,385.4 L379.2,384.3 L379.0,383.1 L379.2,381.8 L379.6,380.7 L380.3,379.7 L383.3,376.6 L384.3,375.9 L385.4,375.4 L386.7,375.2 L387.9,375.4 L389.0,375.8 L390.0,376.6ZM411.9,379.8 L412.7,380.8 L413.2,382.0 L413.4,383.3 L413.3,384.6 L412.8,385.7 L412.0,386.8 L408.8,389.9 L407.7,390.7 L406.6,391.2 L405.3,391.3 L404.0,391.1 L402.8,390.6 L401.8,389.9 L398.6,386.7 L397.8,385.6 L397.3,384.5 L397.1,383.2 L397.3,381.9 L397.8,380.8 L398.5,379.8 L401.7,376.6 L402.7,375.8 L403.9,375.3 L405.2,375.1 L406.5,375.3 L407.7,375.8 L408.7,376.6ZM431.3,379.8 L432.1,380.8 L432.6,382.0 L432.7,383.3 L432.6,384.6 L432.1,385.8 L431.3,386.8 L428.0,390.0 L426.9,390.8 L425.7,391.3 L424.4,391.5 L423.1,391.3 L421.9,390.8 L420.9,390.0 L417.6,386.8 L416.8,385.8 L416.3,384.6 L416.1,383.3 L416.3,382.0 L416.8,380.8 L417.6,379.8 L420.8,376.5 L421.9,375.7 L423.1,375.2 L424.4,375.1 L425.7,375.2 L426.9,375.7 L428.0,376.5ZM450.6,379.8 L451.4,380.8 L451.9,382.0 L452.0,383.3 L451.8,384.5 L451.3,385.7 L450.5,386.7 L447.3,390.0 L446.2,390.8 L445.0,391.3 L443.7,391.4 L442.4,391.3 L441.2,390.8 L440.2,390.0 L436.9,386.8 L436.1,385.8 L435.6,384.6 L435.4,383.3 L435.6,382.0 L436.1,380.8 L436.9,379.8 L440.2,376.5 L441.3,375.7 L442.5,375.3 L443.8,375.1 L445.1,375.3 L446.3,375.8 L447.3,376.5ZM469.4,379.8 L470.1,380.8 L470.6,381.9 L470.7,383.2 L470.6,384.4 L470.1,385.6 L469.3,386.6 L466.1,389.8 L465.1,390.5 L463.9,391.0 L462.7,391.2 L461.4,391.1 L460.3,390.6 L459.3,389.9 L456.1,386.7 L455.3,385.7 L454.8,384.5 L454.7,383.2 L454.8,382.0 L455.3,380.8 L456.1,379.8 L459.3,376.6 L460.4,375.8 L461.5,375.3 L462.8,375.1 L464.0,375.3 L465.2,375.8 L466.2,376.6ZM487.1,379.7 L487.8,380.7 L488.3,381.8 L488.4,383.0 L488.2,384.2 L487.8,385.3 L487.1,386.3 L484.0,389.4 L483.1,390.2 L482.0,390.7 L480.8,390.8 L479.6,390.7 L478.5,390.3 L477.6,389.6 L474.6,386.5 L473.9,385.5 L473.4,384.4 L473.3,383.1 L473.4,381.9 L473.9,380.7 L474.7,379.7 L477.7,376.6 L478.7,375.9 L479.8,375.4 L481.0,375.3 L482.2,375.4 L483.3,375.9 L484.2,376.7ZM384.3,394.5 L385.1,395.5 L385.6,396.6 L385.8,397.8 L385.7,399.0 L385.3,400.1 L384.6,401.0 L381.8,403.9 L380.9,404.5 L379.9,404.9 L378.7,405.0 L377.6,404.8 L376.5,404.3 L375.5,403.5 L372.5,400.4 L371.7,399.4 L371.2,398.3 L371.0,397.2 L371.1,396.0 L371.4,394.9 L372.1,394.0 L374.8,391.2 L375.7,390.5 L376.8,390.0 L377.9,389.9 L379.1,390.1 L380.2,390.6 L381.2,391.3ZM402.6,394.9 L403.4,395.9 L403.9,397.1 L404.1,398.4 L404.0,399.6 L403.5,400.7 L402.8,401.7 L399.8,404.6 L398.8,405.3 L397.7,405.8 L396.5,405.9 L395.2,405.7 L394.1,405.2 L393.0,404.4 L389.8,401.3 L389.0,400.3 L388.5,399.1 L388.3,397.9 L388.4,396.7 L388.8,395.6 L389.6,394.6 L392.6,391.6 L393.5,390.9 L394.7,390.4 L395.9,390.3 L397.2,390.5 L398.4,391.0 L399.4,391.7ZM421.6,395.2 L422.4,396.2 L422.9,397.3 L423.1,398.6 L423.0,399.8 L422.5,401.0 L421.7,402.0 L418.5,405.1 L417.5,405.8 L416.3,406.2 L415.0,406.4 L413.8,406.2 L412.6,405.7 L411.5,404.9 L408.3,401.8 L407.5,400.8 L406.9,399.6 L406.7,398.4 L406.9,397.2 L407.3,396.0 L408.1,395.0 L411.3,391.9 L412.3,391.1 L413.5,390.6 L414.8,390.5 L416.1,390.7 L417.3,391.2 L418.3,391.9ZM440.9,395.1 L441.7,396.1 L442.2,397.3 L442.3,398.6 L442.1,399.8 L441.6,401.0 L440.8,402.0 L437.5,405.1 L436.5,405.9 L435.3,406.3 L434.0,406.5 L432.8,406.3 L431.6,405.9 L430.5,405.1 L427.3,402.0 L426.5,401.0 L426.0,399.9 L425.8,398.6 L426.0,397.4 L426.5,396.2 L427.3,395.2 L430.5,392.0 L431.6,391.2 L432.8,390.7 L434.1,390.5 L435.4,390.7 L436.6,391.2 L437.6,392.0ZM459.9,394.9 L460.6,395.9 L461.1,397.0 L461.2,398.3 L461.0,399.5 L460.5,400.6 L459.7,401.6 L456.4,404.8 L455.4,405.6 L454.2,406.0 L452.9,406.2 L451.7,406.1 L450.5,405.7 L449.5,404.9 L446.4,401.9 L445.6,400.9 L445.1,399.8 L445.0,398.5 L445.2,397.3 L445.7,396.1 L446.5,395.1 L449.8,391.9 L450.8,391.1 L452.0,390.6 L453.3,390.4 L454.6,390.6 L455.7,391.1 L456.7,391.8ZM478.1,394.5 L478.8,395.4 L479.2,396.5 L479.3,397.7 L479.1,398.9 L478.6,400.0 L477.8,401.0 L474.6,404.1 L473.6,404.9 L472.5,405.4 L471.3,405.6 L470.1,405.5 L469.0,405.1 L468.0,404.4 L465.1,401.5 L464.3,400.5 L463.9,399.4 L463.8,398.2 L464.0,397.0 L464.5,395.8 L465.3,394.8 L468.5,391.6 L469.5,390.8 L470.7,390.3 L471.9,390.2 L473.1,390.3 L474.2,390.7 L475.2,391.5ZM495.1,393.8 L495.7,394.7 L496.1,395.7 L496.1,396.8 L495.9,398.0 L495.4,399.1 L494.7,400.0 L491.7,403.1 L490.7,403.8 L489.7,404.3 L488.5,404.6 L487.4,404.5 L486.4,404.1 L485.6,403.5 L482.9,400.7 L482.2,399.8 L481.8,398.8 L481.7,397.6 L481.9,396.4 L482.4,395.3 L483.2,394.3 L486.3,391.2 L487.2,390.4 L488.3,389.9 L489.4,389.7 L490.6,389.8 L491.6,390.3 L492.4,390.9ZM376.5,408.1 L377.3,409.1 L377.9,410.2 L378.1,411.3 L378.1,412.4 L377.7,413.4 L377.1,414.2 L374.6,416.6 L373.9,417.1 L372.9,417.4 L371.8,417.4 L370.7,417.2 L369.7,416.6 L368.8,415.9 L365.7,412.9 L365.0,412.0 L364.4,411.0 L364.2,409.9 L364.2,408.9 L364.5,407.9 L365.0,407.1 L367.4,404.6 L368.2,404.0 L369.2,403.6 L370.3,403.6 L371.4,403.8 L372.5,404.3 L373.5,405.1ZM394.0,409.2 L394.8,410.2 L395.3,411.3 L395.6,412.4 L395.5,413.6 L395.1,414.6 L394.4,415.5 L391.6,418.1 L390.7,418.7 L389.7,419.0 L388.5,419.1 L387.3,418.8 L386.2,418.3 L385.2,417.6 L382.0,414.6 L381.3,413.7 L380.7,412.6 L380.5,411.5 L380.5,410.4 L380.9,409.3 L381.5,408.5 L384.2,405.8 L385.1,405.1 L386.2,404.7 L387.4,404.6 L388.6,404.8 L389.8,405.3 L390.8,406.1ZM412.4,409.8 L413.2,410.8 L413.7,411.9 L413.9,413.1 L413.8,414.2 L413.3,415.3 L412.6,416.2 L409.6,419.0 L408.6,419.6 L407.5,420.0 L406.3,420.1 L405.0,419.9 L403.9,419.4 L402.9,418.7 L399.6,415.7 L398.8,414.8 L398.3,413.7 L398.1,412.5 L398.2,411.4 L398.6,410.3 L399.3,409.4 L402.3,406.5 L403.2,405.8 L404.4,405.4 L405.6,405.3 L406.9,405.5 L408.1,406.0 L409.1,406.7ZM431.3,410.0 L432.0,411.0 L432.5,412.1 L432.7,413.3 L432.5,414.4 L432.0,415.5 L431.2,416.5 L428.1,419.3 L427.1,420.0 L425.9,420.4 L424.7,420.6 L423.4,420.4 L422.2,420.0 L421.2,419.3 L418.0,416.3 L417.2,415.4 L416.7,414.3 L416.5,413.1 L416.6,412.0 L417.1,410.9 L417.9,409.9 L421.0,406.9 L422.0,406.2 L423.2,405.7 L424.5,405.6 L425.8,405.8 L427.0,406.2 L428.0,407.0ZM450.1,409.8 L450.8,410.7 L451.3,411.8 L451.4,413.0 L451.2,414.1 L450.7,415.2 L449.9,416.2 L446.7,419.1 L445.6,419.8 L444.5,420.3 L443.2,420.5 L442.0,420.4 L440.8,419.9 L439.8,419.3 L436.7,416.4 L435.9,415.5 L435.5,414.4 L435.3,413.3 L435.5,412.1 L436.0,411.0 L436.8,410.0 L440.0,406.9 L441.1,406.2 L442.3,405.7 L443.5,405.5 L444.8,405.7 L446.0,406.1 L447.0,406.8ZM468.5,409.1 L469.1,410.0 L469.5,411.1 L469.6,412.2 L469.4,413.4 L468.8,414.4 L468.0,415.4 L464.8,418.4 L463.8,419.1 L462.7,419.6 L461.4,419.8 L460.2,419.7 L459.1,419.3 L458.2,418.7 L455.3,416.0 L454.5,415.1 L454.1,414.1 L454.0,412.9 L454.2,411.7 L454.7,410.6 L455.5,409.7 L458.8,406.5 L459.8,405.8 L461.0,405.3 L462.2,405.1 L463.5,405.2 L464.6,405.6 L465.5,406.3ZM485.8,408.0 L486.4,408.9 L486.7,409.9 L486.8,411.0 L486.5,412.1 L486.0,413.1 L485.2,414.1 L482.1,417.0 L481.1,417.8 L480.0,418.3 L478.9,418.5 L477.7,418.5 L476.7,418.2 L475.9,417.6 L473.2,415.0 L472.5,414.2 L472.1,413.2 L472.1,412.1 L472.3,410.9 L472.8,409.8 L473.6,408.9 L476.8,405.8 L477.8,405.0 L478.9,404.5 L480.1,404.3 L481.3,404.4 L482.3,404.7 L483.2,405.4ZM501.7,406.5 L502.2,407.3 L502.5,408.2 L502.5,409.3 L502.2,410.3 L501.7,411.3 L501.0,412.2 L498.0,415.2 L497.1,415.9 L496.1,416.4 L495.0,416.7 L494.0,416.7 L493.1,416.4 L492.3,415.9 L490.0,413.6 L489.4,412.8 L489.1,411.8 L489.1,410.8 L489.3,409.7 L489.9,408.6 L490.6,407.6 L493.6,404.6 L494.6,403.9 L495.6,403.3 L496.7,403.1 L497.7,403.2 L498.7,403.5 L499.5,404.1ZM369.9,420.1 L370.7,421.0 L371.3,422.0 L371.6,423.0 L371.6,423.9 L371.3,424.8 L370.8,425.4 L368.6,427.3 L367.9,427.7 L367.1,427.9 L366.1,427.8 L365.1,427.5 L364.1,427.0 L363.2,426.3 L360.3,423.5 L359.6,422.7 L359.0,421.8 L358.7,420.8 L358.6,419.9 L358.8,419.1 L359.3,418.4 L361.3,416.4 L362.0,415.9 L362.9,415.6 L363.9,415.7 L365.0,415.9 L366.0,416.5 L366.9,417.2ZM386.3,421.9 L387.1,422.8 L387.6,423.9 L387.9,424.9 L387.9,425.9 L387.5,426.8 L386.9,427.5 L384.4,429.6 L383.6,430.1 L382.6,430.3 L381.6,430.3 L380.5,430.1 L379.4,429.6 L378.4,428.9 L375.4,426.1 L374.6,425.2 L374.0,424.3 L373.8,423.3 L373.7,422.3 L374.0,421.4 L374.6,420.7 L377.0,418.4 L377.8,417.9 L378.8,417.6 L379.9,417.5 L381.1,417.8 L382.2,418.3 L383.1,419.0ZM403.8,423.2 L404.6,424.1 L405.1,425.1 L405.4,426.1 L405.3,427.2 L404.9,428.1 L404.2,428.9 L401.4,431.2 L400.5,431.7 L399.5,432.0 L398.3,432.1 L397.1,431.9 L396.0,431.4 L395.0,430.7 L391.9,428.0 L391.1,427.1 L390.5,426.1 L390.3,425.1 L390.3,424.1 L390.7,423.2 L391.3,422.4 L394.1,419.9 L394.9,419.3 L396.0,418.9 L397.2,418.8 L398.4,419.1 L399.6,419.5 L400.6,420.3ZM422.0,423.8 L422.8,424.6 L423.3,425.7 L423.5,426.7 L423.3,427.8 L422.9,428.7 L422.1,429.6 L419.1,432.0 L418.2,432.6 L417.1,433.0 L415.9,433.1 L414.7,432.9 L413.5,432.5 L412.5,431.8 L409.4,429.2 L408.6,428.3 L408.1,427.3 L407.9,426.3 L408.0,425.2 L408.4,424.2 L409.1,423.4 L412.0,420.8 L413.0,420.1 L414.2,419.7 L415.4,419.6 L416.6,419.8 L417.8,420.2 L418.8,420.9ZM440.5,423.7 L441.2,424.6 L441.6,425.6 L441.8,426.7 L441.6,427.7 L441.1,428.7 L440.3,429.5 L437.2,432.1 L436.2,432.8 L435.1,433.2 L433.8,433.3 L432.6,433.2 L431.5,432.8 L430.5,432.2 L427.4,429.6 L426.7,428.8 L426.2,427.8 L426.0,426.8 L426.2,425.7 L426.6,424.7 L427.4,423.8 L430.5,421.1 L431.5,420.4 L432.7,419.9 L434.0,419.8 L435.2,419.9 L436.4,420.3 L437.4,421.0ZM458.6,423.1 L459.3,423.9 L459.7,424.9 L459.8,425.9 L459.5,427.0 L459.0,427.9 L458.2,428.8 L455.0,431.5 L454.1,432.2 L452.9,432.6 L451.7,432.8 L450.5,432.7 L449.4,432.4 L448.5,431.8 L445.6,429.4 L444.9,428.6 L444.4,427.6 L444.3,426.6 L444.5,425.5 L445.0,424.5 L445.8,423.6 L449.0,420.8 L450.0,420.0 L451.2,419.6 L452.4,419.4 L453.7,419.5 L454.8,419.9 L455.7,420.5ZM476.1,421.8 L476.7,422.6 L477.0,423.5 L477.0,424.5 L476.8,425.5 L476.2,426.5 L475.4,427.4 L472.3,430.1 L471.3,430.8 L470.2,431.3 L469.1,431.5 L467.9,431.5 L466.9,431.2 L466.0,430.7 L463.3,428.5 L462.7,427.7 L462.3,426.8 L462.2,425.8 L462.5,424.7 L463.0,423.7 L463.8,422.8 L467.0,419.9 L468.0,419.2 L469.2,418.7 L470.4,418.4 L471.5,418.5 L472.6,418.8 L473.4,419.4ZM492.3,420.0 L492.8,420.7 L493.1,421.5 L493.1,422.5 L492.8,423.4 L492.2,424.4 L491.5,425.3 L488.4,428.0 L487.5,428.7 L486.5,429.2 L485.4,429.5 L484.3,429.6 L483.4,429.3 L482.6,428.9 L480.2,426.8 L479.7,426.1 L479.4,425.3 L479.3,424.3 L479.6,423.2 L480.2,422.3 L481.0,421.4 L484.1,418.4 L485.0,417.7 L486.1,417.2 L487.2,416.9 L488.3,416.9 L489.3,417.2 L490.0,417.8ZM379.6,432.7 L380.4,433.5 L381.0,434.3 L381.2,435.2 L381.2,436.1 L381.0,436.8 L380.4,437.3 L378.2,438.9 L377.5,439.2 L376.6,439.3 L375.6,439.2 L374.6,438.9 L373.6,438.5 L372.7,437.8 L369.7,435.3 L369.0,434.6 L368.4,433.7 L368.1,432.9 L368.1,432.1 L368.3,431.4 L368.8,430.8 L370.9,429.1 L371.6,428.6 L372.5,428.5 L373.5,428.5 L374.6,428.8 L375.6,429.3 L376.6,430.0ZM396.1,434.6 L396.9,435.4 L397.4,436.3 L397.6,437.2 L397.6,438.1 L397.2,438.8 L396.6,439.5 L394.1,441.2 L393.2,441.6 L392.3,441.8 L391.2,441.8 L390.1,441.5 L389.0,441.1 L388.1,440.5 L385.0,438.0 L384.3,437.3 L383.7,436.4 L383.5,435.6 L383.5,434.7 L383.8,433.9 L384.3,433.3 L386.8,431.3 L387.6,430.9 L388.6,430.6 L389.7,430.6 L390.9,430.8 L392.0,431.3 L392.9,432.0ZM413.4,435.8 L414.2,436.6 L414.7,437.4 L414.9,438.4 L414.8,439.2 L414.4,440.1 L413.7,440.7 L410.9,442.7 L410.0,443.2 L409.0,443.4 L407.8,443.4 L406.7,443.2 L405.6,442.8 L404.6,442.3 L401.5,439.9 L400.8,439.2 L400.2,438.3 L400.0,437.4 L400.1,436.5 L400.4,435.7 L401.1,435.0 L403.8,432.9 L404.7,432.3 L405.8,432.0 L407.0,431.9 L408.2,432.1 L409.3,432.6 L410.3,433.2ZM431.2,436.1 L432.0,436.9 L432.4,437.8 L432.6,438.7 L432.4,439.6 L431.9,440.4 L431.2,441.1 L428.2,443.3 L427.3,443.8 L426.2,444.1 L425.0,444.2 L423.9,444.0 L422.8,443.7 L421.8,443.2 L418.8,440.9 L418.0,440.2 L417.5,439.4 L417.3,438.5 L417.5,437.5 L417.9,436.7 L418.6,436.0 L421.6,433.6 L422.5,433.0 L423.6,432.7 L424.8,432.6 L426.1,432.7 L427.2,433.1 L428.2,433.7ZM449.0,435.7 L449.7,436.4 L450.1,437.3 L450.2,438.2 L450.0,439.1 L449.5,439.9 L448.7,440.7 L445.6,442.9 L444.7,443.5 L443.6,443.9 L442.4,444.0 L441.3,443.9 L440.2,443.6 L439.3,443.2 L436.3,441.1 L435.6,440.4 L435.2,439.6 L435.0,438.7 L435.2,437.7 L435.7,436.9 L436.4,436.1 L439.5,433.6 L440.5,433.0 L441.6,432.6 L442.9,432.4 L444.1,432.5 L445.2,432.9 L446.1,433.4ZM466.3,434.5 L466.9,435.2 L467.2,436.0 L467.3,436.8 L467.0,437.7 L466.5,438.6 L465.7,439.3 L462.7,441.7 L461.7,442.3 L460.6,442.7 L459.5,442.9 L458.4,442.9 L457.3,442.7 L456.5,442.3 L453.7,440.4 L453.1,439.7 L452.7,438.9 L452.6,438.0 L452.8,437.1 L453.3,436.2 L454.1,435.4 L457.3,432.9 L458.2,432.2 L459.4,431.8 L460.6,431.5 L461.7,431.6 L462.8,431.9 L463.6,432.4ZM482.7,432.5 L483.2,433.1 L483.4,433.9 L483.4,434.7 L483.1,435.6 L482.6,436.4 L481.8,437.2 L478.8,439.6 L477.9,440.2 L476.9,440.7 L475.8,441.0 L474.7,441.0 L473.8,440.9 L473.0,440.5 L470.5,438.8 L470.0,438.2 L469.6,437.4 L469.6,436.6 L469.9,435.7 L470.4,434.8 L471.2,434.0 L474.3,431.3 L475.3,430.7 L476.3,430.2 L477.5,429.9 L478.6,429.9 L479.5,430.1 L480.3,430.6ZM497.7,429.7 L498.1,430.2 L498.3,430.9 L498.2,431.7 L497.9,432.5 L497.4,433.4 L496.6,434.1 L493.8,436.6 L492.9,437.3 L491.9,437.8 L490.9,438.1 L490.0,438.2 L489.1,438.1 L488.4,437.8 L486.3,436.4 L485.8,435.8 L485.6,435.1 L485.6,434.3 L485.9,433.4 L486.4,432.6 L487.2,431.8 L490.2,429.1 L491.1,428.4 L492.1,427.9 L493.2,427.6 L494.2,427.5 L495.0,427.7 L495.7,428.1ZM373.9,440.9 L374.6,441.6 L375.2,442.4 L375.4,443.1 L375.5,443.7 L375.2,444.2 L374.7,444.6 L372.7,445.5 L372.0,445.7 L371.2,445.7 L370.3,445.5 L369.4,445.1 L368.5,444.7 L367.6,444.1 L364.9,441.9 L364.2,441.3 L363.7,440.6 L363.4,439.9 L363.4,439.3 L363.5,438.8 L363.9,438.4 L365.8,437.3 L366.4,437.0 L367.2,437.0 L368.2,437.1 L369.1,437.4 L370.1,437.9 L371.0,438.5ZM389.2,443.7 L389.9,444.4 L390.5,445.1 L390.7,445.8 L390.7,446.5 L390.4,447.1 L389.8,447.5 L387.5,448.7 L386.7,448.9 L385.8,449.0 L384.8,448.9 L383.7,448.6 L382.8,448.2 L381.9,447.6 L379.0,445.5 L378.3,444.9 L377.8,444.2 L377.5,443.5 L377.5,442.9 L377.7,442.3 L378.2,441.8 L380.4,440.4 L381.2,440.1 L382.1,440.0 L383.1,440.1 L384.2,440.3 L385.2,440.8 L386.2,441.4ZM405.6,445.5 L406.3,446.2 L406.8,446.9 L407.0,447.7 L406.9,448.4 L406.6,449.0 L405.9,449.5 L403.3,450.8 L402.5,451.1 L401.5,451.3 L400.4,451.2 L399.3,451.0 L398.3,450.7 L397.4,450.2 L394.4,448.2 L393.7,447.6 L393.2,446.9 L392.9,446.2 L393.0,445.5 L393.3,444.8 L393.9,444.3 L396.4,442.7 L397.2,442.3 L398.2,442.1 L399.3,442.1 L400.5,442.3 L401.6,442.7 L402.5,443.3ZM422.6,446.4 L423.3,447.1 L423.8,447.8 L423.9,448.5 L423.8,449.2 L423.4,449.9 L422.7,450.4 L419.9,452.0 L419.0,452.4 L418.0,452.5 L416.8,452.6 L415.7,452.4 L414.7,452.1 L413.7,451.7 L410.8,449.8 L410.0,449.2 L409.6,448.6 L409.3,447.8 L409.4,447.1 L409.8,446.5 L410.5,445.9 L413.2,444.1 L414.1,443.6 L415.2,443.4 L416.4,443.3 L417.5,443.5 L418.6,443.8 L419.6,444.3ZM439.8,446.4 L440.5,447.0 L440.9,447.7 L441.0,448.4 L440.9,449.1 L440.4,449.8 L439.7,450.4 L436.7,452.1 L435.8,452.5 L434.8,452.8 L433.6,452.9 L432.5,452.8 L431.4,452.6 L430.5,452.2 L427.6,450.5 L426.9,449.9 L426.5,449.3 L426.3,448.6 L426.5,447.8 L426.9,447.1 L427.6,446.5 L430.5,444.5 L431.5,444.0 L432.6,443.7 L433.7,443.6 L434.9,443.7 L436.0,444.0 L436.9,444.5ZM456.8,445.4 L457.4,446.0 L457.8,446.6 L457.9,447.3 L457.6,448.1 L457.1,448.8 L456.4,449.4 L453.4,451.3 L452.5,451.7 L451.5,452.0 L450.3,452.2 L449.2,452.2 L448.2,452.0 L447.3,451.7 L444.6,450.2 L443.9,449.7 L443.5,449.0 L443.4,448.3 L443.6,447.6 L444.1,446.9 L444.8,446.2 L447.8,444.1 L448.8,443.5 L449.9,443.2 L451.1,443.0 L452.2,443.0 L453.2,443.3 L454.1,443.7ZM473.1,443.5 L473.7,444.0 L474.0,444.6 L474.0,445.3 L473.7,446.0 L473.2,446.7 L472.5,447.3 L469.5,449.4 L468.6,449.9 L467.6,450.3 L466.5,450.5 L465.5,450.6 L464.5,450.5 L463.7,450.2 L461.2,448.9 L460.6,448.4 L460.2,447.8 L460.2,447.1 L460.4,446.4 L460.9,445.6 L461.6,445.0 L464.7,442.7 L465.6,442.1 L466.7,441.7 L467.8,441.5 L468.9,441.5 L469.9,441.6 L470.7,442.0ZM488.3,440.7 L488.8,441.1 L489.0,441.7 L489.0,442.3 L488.7,443.0 L488.2,443.7 L487.4,444.3 L484.6,446.5 L483.8,447.0 L482.8,447.5 L481.8,447.8 L480.8,447.9 L479.9,447.9 L479.2,447.7 L477.0,446.6 L476.4,446.2 L476.2,445.6 L476.1,445.0 L476.4,444.2 L476.9,443.5 L477.7,442.8 L480.7,440.5 L481.6,439.8 L482.6,439.4 L483.6,439.1 L484.6,439.0 L485.5,439.1 L486.2,439.4ZM382.9,450.1 L383.6,450.6 L384.1,451.2 L384.4,451.7 L384.3,452.2 L384.1,452.5 L383.5,452.8 L381.3,453.3 L380.6,453.3 L379.7,453.2 L378.8,453.1 L377.8,452.8 L376.9,452.4 L376.1,451.9 L373.5,450.2 L372.8,449.7 L372.4,449.2 L372.1,448.7 L372.1,448.2 L372.3,447.9 L372.8,447.6 L374.8,446.9 L375.5,446.7 L376.3,446.7 L377.3,446.9 L378.3,447.2 L379.2,447.6 L380.1,448.1ZM398.3,452.6 L399.0,453.2 L399.5,453.7 L399.7,454.3 L399.7,454.8 L399.3,455.2 L398.7,455.4 L396.2,456.2 L395.5,456.3 L394.5,456.3 L393.5,456.2 L392.5,455.9 L391.5,455.6 L390.6,455.2 L387.9,453.7 L387.2,453.2 L386.7,452.7 L386.4,452.1 L386.5,451.7 L386.8,451.2 L387.3,450.9 L389.7,450.0 L390.4,449.7 L391.4,449.6 L392.4,449.7 L393.5,450.0 L394.5,450.3 L395.4,450.8ZM414.5,454.2 L415.3,454.7 L415.7,455.2 L415.9,455.7 L415.8,456.3 L415.4,456.7 L414.7,457.0 L412.1,458.0 L411.2,458.2 L410.2,458.2 L409.2,458.2 L408.1,458.0 L407.1,457.8 L406.2,457.4 L403.3,456.0 L402.6,455.6 L402.1,455.1 L401.9,454.5 L402.0,454.0 L402.4,453.6 L403.0,453.2 L405.6,452.0 L406.4,451.7 L407.4,451.6 L408.5,451.6 L409.6,451.7 L410.7,452.1 L411.6,452.5ZM431.2,454.7 L431.9,455.1 L432.3,455.6 L432.4,456.2 L432.3,456.7 L431.9,457.1 L431.2,457.5 L428.4,458.7 L427.5,458.9 L426.5,459.1 L425.4,459.1 L424.3,459.0 L423.2,458.8 L422.3,458.5 L419.5,457.3 L418.8,456.9 L418.4,456.4 L418.2,455.9 L418.3,455.3 L418.7,454.9 L419.4,454.4 L422.1,453.0 L423.0,452.7 L424.1,452.5 L425.2,452.4 L426.4,452.5 L427.4,452.8 L428.3,453.2ZM447.8,454.1 L448.4,454.5 L448.8,455.0 L448.9,455.5 L448.8,456.0 L448.3,456.5 L447.6,457.0 L444.7,458.3 L443.8,458.6 L442.8,458.8 L441.7,458.9 L440.6,458.9 L439.6,458.8 L438.7,458.5 L436.0,457.5 L435.3,457.1 L434.9,456.7 L434.7,456.1 L434.9,455.6 L435.3,455.1 L436.0,454.6 L438.9,453.0 L439.9,452.6 L440.9,452.3 L442.0,452.2 L443.2,452.3 L444.2,452.4 L445.1,452.8ZM464.0,452.5 L464.6,452.9 L464.9,453.3 L465.0,453.8 L464.7,454.3 L464.3,454.8 L463.6,455.3 L460.7,456.8 L459.9,457.1 L458.8,457.4 L457.8,457.6 L456.7,457.7 L455.7,457.6 L454.9,457.4 L452.3,456.6 L451.7,456.3 L451.3,455.8 L451.2,455.3 L451.4,454.8 L451.9,454.3 L452.6,453.7 L455.5,452.0 L456.4,451.6 L457.5,451.2 L458.6,451.0 L459.7,451.0 L460.7,451.1 L461.5,451.4ZM479.3,449.9 L479.8,450.1 L480.1,450.5 L480.1,451.0 L479.8,451.5 L479.4,452.0 L478.7,452.5 L475.9,454.2 L475.1,454.6 L474.1,454.9 L473.1,455.2 L472.1,455.3 L471.2,455.3 L470.5,455.2 L468.1,454.6 L467.5,454.3 L467.2,453.9 L467.1,453.5 L467.3,452.9 L467.8,452.4 L468.5,451.8 L471.4,450.0 L472.3,449.5 L473.3,449.1 L474.4,448.8 L475.4,448.7 L476.3,448.8 L477.1,449.0ZM493.3,446.2 L493.8,446.4 L494.0,446.7 L493.9,447.2 L493.7,447.7 L493.2,448.2 L492.5,448.7 L490.0,450.5 L489.2,450.9 L488.3,451.3 L487.4,451.7 L486.5,451.9 L485.7,452.0 L485.0,451.9 L482.9,451.5 L482.4,451.3 L482.1,451.0 L482.1,450.5 L482.3,450.0 L482.8,449.4 L483.5,448.9 L486.3,446.9 L487.2,446.4 L488.1,445.9 L489.1,445.6 L490.0,445.4 L490.8,445.4 L491.4,445.5ZM377.0,453.5 L377.7,453.9 L378.1,454.3 L378.3,454.6 L378.3,454.9 L378.0,455.0 L377.5,455.0 L375.3,454.9 L374.6,454.7 L373.8,454.5 L372.9,454.3 L372.0,453.9 L371.2,453.6 L370.5,453.2 L368.1,451.9 L367.5,451.6 L367.1,451.2 L366.9,450.9 L367.0,450.7 L367.2,450.5 L367.6,450.5 L369.6,450.4 L370.2,450.4 L371.0,450.6 L371.9,450.8 L372.8,451.1 L373.7,451.5 L374.5,452.0ZM391.5,456.9 L392.2,457.2 L392.6,457.6 L392.8,457.9 L392.7,458.2 L392.4,458.4 L391.8,458.4 L389.4,458.5 L388.6,458.4 L387.7,458.3 L386.8,458.1 L385.8,457.9 L384.9,457.6 L384.1,457.3 L381.5,456.2 L380.9,455.8 L380.5,455.5 L380.3,455.2 L380.3,454.9 L380.6,454.7 L381.1,454.6 L383.4,454.3 L384.1,454.3 L385.0,454.3 L385.9,454.5 L387.0,454.7 L387.9,455.1 L388.8,455.5ZM406.9,459.1 L407.6,459.4 L408.1,459.8 L408.3,460.1 L408.1,460.3 L407.8,460.6 L407.1,460.7 L404.5,461.0 L403.7,461.0 L402.8,460.9 L401.7,460.8 L400.7,460.6 L399.7,460.4 L398.9,460.2 L396.2,459.2 L395.5,458.9 L395.1,458.6 L394.9,458.3 L395.0,458.0 L395.3,457.8 L395.9,457.6 L398.4,457.1 L399.2,457.0 L400.1,456.9 L401.2,457.0 L402.3,457.2 L403.3,457.5 L404.1,457.8ZM423.0,460.1 L423.7,460.4 L424.1,460.8 L424.3,461.1 L424.2,461.4 L423.7,461.6 L423.1,461.8 L420.4,462.3 L419.5,462.3 L418.5,462.4 L417.4,462.3 L416.4,462.2 L415.4,462.1 L414.5,461.9 L411.7,461.1 L411.1,460.9 L410.6,460.6 L410.5,460.3 L410.6,460.0 L411.0,459.7 L411.6,459.5 L414.2,458.8 L415.1,458.6 L416.1,458.5 L417.2,458.5 L418.3,458.6 L419.3,458.8 L420.2,459.1ZM439.3,460.1 L440.0,460.4 L440.4,460.7 L440.5,461.0 L440.3,461.3 L439.9,461.5 L439.2,461.8 L436.5,462.4 L435.6,462.6 L434.6,462.7 L433.5,462.7 L432.4,462.7 L431.4,462.6 L430.5,462.5 L427.8,461.9 L427.1,461.7 L426.7,461.4 L426.5,461.1 L426.7,460.8 L427.1,460.5 L427.8,460.3 L430.5,459.3 L431.4,459.1 L432.5,458.9 L433.6,458.8 L434.7,458.9 L435.7,459.0 L436.6,459.2ZM455.3,458.9 L456.0,459.1 L456.3,459.4 L456.4,459.7 L456.3,460.0 L455.8,460.3 L455.2,460.6 L452.4,461.4 L451.6,461.6 L450.6,461.8 L449.5,461.9 L448.4,462.0 L447.4,462.0 L446.6,461.9 L443.9,461.5 L443.3,461.4 L442.9,461.1 L442.7,460.8 L442.9,460.5 L443.3,460.2 L444.0,459.9 L446.8,458.8 L447.7,458.5 L448.7,458.2 L449.8,458.1 L450.9,458.0 L451.9,458.1 L452.7,458.3ZM470.7,456.7 L471.3,456.8 L471.6,457.0 L471.7,457.3 L471.5,457.6 L471.1,457.9 L470.4,458.2 L467.8,459.3 L467.0,459.5 L466.0,459.8 L465.0,460.0 L464.0,460.1 L463.0,460.2 L462.2,460.2 L459.7,460.0 L459.1,459.9 L458.7,459.7 L458.6,459.4 L458.8,459.1 L459.2,458.8 L459.9,458.4 L462.7,457.1 L463.6,456.7 L464.6,456.4 L465.6,456.2 L466.6,456.1 L467.6,456.1 L468.4,456.2ZM485.1,453.3 L485.6,453.3 L485.9,453.5 L485.9,453.8 L485.7,454.1 L485.3,454.4 L484.7,454.8 L482.2,456.0 L481.4,456.3 L480.5,456.6 L479.6,456.9 L478.6,457.1 L477.8,457.2 L477.0,457.3 L474.7,457.3 L474.2,457.3 L473.8,457.1 L473.8,456.9 L474.0,456.6 L474.4,456.2 L475.1,455.8 L477.7,454.3 L478.6,453.9 L479.5,453.6 L480.5,453.3 L481.4,453.1 L482.3,453.0 L483.0,453.0ZM498.0,448.7 L498.5,448.7 L498.7,448.9 L498.7,449.1 L498.5,449.4 L498.1,449.7 L497.5,450.1 L495.3,451.5 L494.6,451.9 L493.8,452.3 L492.9,452.6 L492.1,452.9 L491.3,453.1 L490.6,453.3 L488.6,453.5 L488.1,453.5 L487.8,453.4 L487.8,453.2 L488.0,452.9 L488.4,452.5 L489.0,452.0 L491.5,450.4 L492.3,450.0 L493.2,449.6 L494.1,449.2 L494.9,448.9 L495.6,448.8 L496.2,448.7ZM371.2,454.0 L371.7,454.3 L372.1,454.5 L372.2,454.5 L372.1,454.5 L371.7,454.4 L371.2,454.2 L369.0,453.4 L368.4,453.1 L367.6,452.8 L366.7,452.5 L365.9,452.1 L365.2,451.8 L364.5,451.5 L362.5,450.6 L362.0,450.4 L361.7,450.2 L361.6,450.2 L361.7,450.2 L362.0,450.3 L362.4,450.4 L364.3,451.0 L364.9,451.2 L365.7,451.5 L366.5,451.8 L367.4,452.2 L368.2,452.5 L368.9,452.9ZM384.8,458.0 L385.4,458.3 L385.8,458.4 L385.9,458.5 L385.8,458.4 L385.4,458.3 L384.8,458.2 L382.4,457.6 L381.6,457.4 L380.8,457.2 L379.8,456.9 L378.9,456.6 L378.0,456.4 L377.3,456.2 L375.0,455.5 L374.5,455.3 L374.1,455.2 L374.0,455.1 L374.1,455.2 L374.5,455.2 L375.0,455.3 L377.2,455.7 L377.9,455.8 L378.7,456.0 L379.6,456.2 L380.6,456.5 L381.5,456.8 L382.3,457.1ZM399.6,460.9 L400.2,461.1 L400.6,461.2 L400.7,461.3 L400.6,461.2 L400.2,461.2 L399.6,461.1 L397.0,460.7 L396.2,460.5 L395.2,460.4 L394.2,460.2 L393.2,460.0 L392.3,459.8 L391.5,459.7 L389.0,459.2 L388.4,459.0 L388.0,459.0 L387.9,458.9 L388.0,459.0 L388.4,459.0 L389.0,459.0 L391.4,459.2 L392.2,459.2 L393.1,459.3 L394.1,459.5 L395.1,459.7 L396.1,459.9 L396.9,460.1ZM462.7,460.7 L463.3,460.7 L463.7,460.8 L463.8,460.7 L463.7,460.8 L463.3,460.8 L462.7,460.9 L460.1,461.3 L459.3,461.4 L458.3,461.6 L457.2,461.7 L456.2,461.8 L455.2,461.9 L454.4,462.0 L451.7,462.3 L451.1,462.4 L450.7,462.4 L450.5,462.4 L450.7,462.4 L451.1,462.3 L451.7,462.1 L454.5,461.5 L455.3,461.3 L456.3,461.1 L457.3,460.9 L458.4,460.8 L459.3,460.8 L460.2,460.8ZM477.4,457.8 L478.0,457.7 L478.3,457.7 L478.5,457.7 L478.3,457.7 L478.0,457.8 L477.4,458.0 L475.0,458.6 L474.2,458.7 L473.3,458.9 L472.3,459.1 L471.3,459.4 L470.4,459.5 L469.6,459.7 L467.1,460.2 L466.5,460.3 L466.1,460.4 L465.9,460.4 L466.1,460.4 L466.5,460.2 L467.1,460.0 L469.7,459.2 L470.5,458.9 L471.5,458.7 L472.5,458.4 L473.4,458.2 L474.3,458.1 L475.1,458.0ZM490.9,453.7 L491.4,453.6 L491.7,453.5 L491.8,453.5 L491.7,453.5 L491.4,453.6 L490.9,453.8 L488.7,454.6 L488.0,454.9 L487.2,455.1 L486.3,455.4 L485.4,455.7 L484.5,456.0 L483.8,456.2 L481.5,456.9 L480.9,457.0 L480.5,457.1 L480.4,457.2 L480.5,457.1 L480.9,457.0 L481.5,456.7 L483.9,455.7 L484.7,455.4 L485.6,455.1 L486.5,454.7 L487.4,454.5 L488.2,454.3 L488.8,454.1ZM377.8,456.3 L378.4,456.5 L378.7,456.6 L378.9,456.6 L378.7,456.6 L378.4,456.5 L377.8,456.3 L375.5,455.6 L374.8,455.4 L374.0,455.1 L373.1,454.8 L372.2,454.5 L371.4,454.2 L370.7,454.0 L368.6,453.2 L368.0,453.0 L367.7,452.8 L367.6,452.8 L367.7,452.8 L368.0,453.0 L368.6,453.2 L370.7,454.0 L371.4,454.2 L372.2,454.5 L373.1,454.8 L374.0,455.1 L374.8,455.4 L375.5,455.6ZM392.1,459.8 L392.7,459.9 L393.1,460.0 L393.2,460.0 L393.1,460.0 L392.7,459.9 L392.1,459.8 L389.6,459.3 L388.8,459.1 L387.9,458.9 L386.9,458.7 L385.9,458.5 L385.0,458.3 L384.3,458.1 L381.9,457.5 L381.3,457.3 L380.9,457.2 L380.8,457.2 L380.9,457.2 L381.3,457.3 L381.9,457.5 L384.3,458.1 L385.0,458.3 L385.9,458.5 L386.9,458.7 L387.9,458.9 L388.8,459.1 L389.6,459.3ZM407.3,462.1 L407.9,462.2 L408.3,462.2 L408.5,462.2 L408.3,462.2 L407.9,462.2 L407.3,462.1 L404.7,461.8 L403.8,461.7 L402.8,461.5 L401.8,461.4 L400.8,461.3 L399.8,461.1 L399.0,461.0 L396.4,460.6 L395.8,460.5 L395.4,460.4 L395.3,460.4 L395.4,460.4 L395.8,460.5 L396.4,460.6 L399.0,461.0 L399.8,461.1 L400.8,461.3 L401.8,461.4 L402.8,461.5 L403.8,461.7 L404.7,461.8ZM470.2,459.6 L470.8,459.5 L471.1,459.4 L471.3,459.4 L471.1,459.4 L470.8,459.5 L470.2,459.6 L467.6,460.1 L466.8,460.2 L465.9,460.4 L464.9,460.6 L463.9,460.7 L462.9,460.9 L462.1,461.0 L459.5,461.4 L458.9,461.5 L458.5,461.5 L458.3,461.5 L458.5,461.5 L458.9,461.5 L459.5,461.4 L462.1,461.0 L462.9,460.9 L463.9,460.7 L464.9,460.6 L465.9,460.4 L466.8,460.2 L467.6,460.1ZM484.3,456.1 L484.9,455.9 L485.2,455.8 L485.3,455.7 L485.2,455.8 L484.9,455.9 L484.3,456.1 L482.0,456.7 L481.2,456.9 L480.4,457.2 L479.4,457.4 L478.5,457.7 L477.6,457.9 L476.8,458.1 L474.4,458.7 L473.8,458.8 L473.4,458.9 L473.3,458.9 L473.4,458.9 L473.8,458.8 L474.4,458.7 L476.8,458.1 L477.6,457.9 L478.5,457.7 L479.4,457.4 L480.4,457.2 L481.2,456.9 L482.0,456.7ZM497.1,451.3 L497.6,451.1 L497.9,451.0 L498.0,450.9 L497.9,451.0 L497.6,451.1 L497.1,451.3 L495.0,452.2 L494.3,452.5 L493.6,452.8 L492.7,453.1 L491.9,453.5 L491.1,453.8 L490.4,454.0 L488.2,454.8 L487.6,455.0 L487.3,455.1 L487.2,455.1 L487.3,455.1 L487.6,455.0 L488.2,454.8 L490.4,454.0 L491.1,453.8 L491.9,453.5 L492.7,453.1 L493.6,452.8 L494.3,452.5 L495.0,452.2Z"/><path fill="#fbed21" d="M380.1,293.1 L377.9,294.4 L377.4,294.7 L376.8,295.0 L376.1,295.3 L375.5,295.6 L374.8,295.8 L374.3,296.0 L373.7,296.1 L373.3,296.2 L371.6,296.5 L376.0,294.2ZM493.8,298.5 L492.2,298.1 L491.8,298.0 L491.3,297.9 L490.8,297.7 L490.2,297.4 L489.5,297.1 L488.9,296.8 L488.3,296.5 L487.8,296.2 L485.7,294.8 L489.6,296.0ZM372.4,299.3 L370.2,301.0 L369.6,301.4 L369.0,301.8 L368.4,302.1 L367.7,302.4 L367.1,302.7 L366.6,302.8 L366.1,302.9 L365.7,302.9 L364.3,302.9 L368.7,300.0ZM385.7,295.0 L383.3,296.6 L382.7,297.0 L382.0,297.3 L381.3,297.6 L380.6,297.8 L379.9,298.0 L379.3,298.1 L378.8,298.1 L378.3,298.1 L376.6,297.8 L381.4,295.2ZM489.2,299.5 L487.6,299.7 L487.2,299.7 L486.7,299.7 L486.0,299.5 L485.4,299.4 L484.7,299.1 L484.0,298.8 L483.4,298.4 L482.8,298.0 L480.5,296.4 L484.6,296.8ZM377.1,303.0 L374.6,305.0 L374.0,305.5 L373.4,305.9 L372.7,306.2 L372.0,306.5 L371.3,306.6 L370.7,306.7 L370.2,306.7 L369.8,306.6 L368.2,306.0 L373.1,302.9ZM391.5,299.6 L388.9,301.5 L388.2,301.9 L387.5,302.3 L386.8,302.6 L386.0,302.8 L385.3,302.9 L384.6,302.9 L384.0,302.8 L383.5,302.7 L381.6,301.8 L386.9,299.0ZM406.8,297.3 L404.2,299.1 L403.6,299.5 L402.8,299.8 L402.0,300.1 L401.2,300.2 L400.5,300.3 L399.7,300.2 L399.0,300.1 L398.5,299.8 L396.3,298.8 L401.8,296.3ZM422.8,296.2 L420.3,297.8 L419.6,298.2 L418.9,298.5 L418.1,298.6 L417.2,298.7 L416.4,298.7 L415.6,298.6 L414.9,298.4 L414.3,298.2 L412.0,296.9 L417.5,294.8ZM439.0,296.2 L436.5,297.7 L435.9,298.0 L435.2,298.2 L434.4,298.3 L433.6,298.4 L432.7,298.3 L431.9,298.2 L431.2,297.9 L430.5,297.6 L428.0,296.1 L433.5,294.4ZM455.0,297.4 L452.7,298.6 L452.1,298.9 L451.4,299.1 L450.6,299.2 L449.8,299.1 L449.0,299.0 L448.2,298.8 L447.4,298.5 L446.8,298.2 L444.2,296.5 L449.4,295.2ZM470.3,299.7 L468.2,300.7 L467.7,300.9 L467.1,301.1 L466.3,301.1 L465.6,301.0 L464.8,300.8 L464.0,300.6 L463.3,300.2 L462.6,299.8 L460.0,298.0 L464.9,297.1ZM484.6,303.2 L482.8,303.9 L482.3,304.1 L481.8,304.2 L481.1,304.1 L480.4,304.0 L479.7,303.8 L478.9,303.4 L478.2,303.1 L477.6,302.6 L475.0,300.7 L479.5,300.3ZM497.5,307.7 L496.0,308.3 L495.6,308.4 L495.2,308.4 L494.6,308.3 L494.0,308.1 L493.3,307.8 L492.6,307.4 L492.0,307.0 L491.4,306.5 L488.9,304.5 L492.8,304.5ZM382.3,309.4 L379.6,311.6 L379.0,312.1 L378.2,312.5 L377.5,312.9 L376.7,313.1 L376.0,313.2 L375.3,313.2 L374.7,313.1 L374.3,312.8 L372.5,311.7 L377.8,308.4ZM397.8,306.8 L395.1,309.0 L394.4,309.5 L393.6,309.9 L392.8,310.2 L392.0,310.3 L391.2,310.4 L390.5,310.3 L389.8,310.1 L389.3,309.9 L387.2,308.4 L392.8,305.4ZM414.2,305.3 L411.4,307.4 L410.8,307.8 L410.0,308.2 L409.1,308.4 L408.3,308.6 L407.5,308.6 L406.7,308.4 L405.9,308.2 L405.3,307.9 L403.0,306.2 L408.8,303.5ZM430.9,304.8 L428.3,306.7 L427.6,307.2 L426.9,307.5 L426.0,307.7 L425.2,307.7 L424.3,307.7 L423.5,307.5 L422.7,307.2 L422.1,306.9 L419.5,305.1 L425.3,302.7ZM447.7,305.4 L445.2,307.1 L444.6,307.5 L443.8,307.7 L443.0,307.9 L442.2,307.9 L441.3,307.8 L440.5,307.6 L439.7,307.3 L439.0,306.9 L436.4,304.9 L441.9,302.9ZM464.0,306.9 L461.8,308.5 L461.2,308.8 L460.5,309.0 L459.7,309.1 L458.9,309.1 L458.0,308.9 L457.2,308.7 L456.4,308.3 L455.7,307.8 L453.0,305.8 L458.3,304.1ZM479.4,309.5 L477.5,310.8 L477.0,311.1 L476.3,311.2 L475.6,311.3 L474.8,311.2 L474.0,311.0 L473.3,310.7 L472.5,310.3 L471.8,309.8 L469.1,307.6 L473.9,306.4ZM493.6,313.1 L492.0,314.2 L491.6,314.4 L491.0,314.5 L490.4,314.5 L489.7,314.3 L488.9,314.1 L488.2,313.8 L487.5,313.3 L486.8,312.8 L484.2,310.5 L488.4,309.7ZM372.8,320.8 L370.0,323.3 L369.4,323.9 L368.6,324.4 L367.9,324.7 L367.1,324.9 L366.4,325.0 L365.8,325.0 L365.2,324.8 L364.7,324.5 L363.1,323.1 L368.4,319.5ZM388.3,318.2 L385.5,320.7 L384.8,321.2 L384.0,321.7 L383.2,322.0 L382.3,322.2 L381.6,322.2 L380.8,322.1 L380.2,321.9 L379.6,321.6 L377.6,319.9 L383.3,316.5ZM404.9,316.5 L402.1,318.9 L401.3,319.4 L400.5,319.8 L399.7,320.1 L398.8,320.3 L398.0,320.3 L397.2,320.1 L396.4,319.9 L395.8,319.5 L393.5,317.6 L399.5,314.4ZM422.2,315.6 L419.4,317.9 L418.7,318.4 L417.9,318.8 L417.0,319.1 L416.1,319.2 L415.2,319.1 L414.4,319.0 L413.6,318.6 L413.0,318.2 L410.4,316.1 L416.4,313.2ZM439.7,315.7 L437.0,317.8 L436.3,318.3 L435.6,318.6 L434.7,318.9 L433.8,318.9 L432.9,318.8 L432.0,318.6 L431.2,318.3 L430.5,317.8 L427.8,315.6 L433.7,312.9ZM457.0,316.5 L454.5,318.6 L453.9,319.0 L453.1,319.3 L452.3,319.5 L451.4,319.5 L450.5,319.4 L449.6,319.1 L448.8,318.7 L448.1,318.2 L445.3,315.8 L451.0,313.5ZM473.5,318.3 L471.3,320.1 L470.8,320.5 L470.1,320.8 L469.3,320.9 L468.4,320.9 L467.6,320.7 L466.7,320.4 L466.0,320.0 L465.2,319.5 L462.4,317.0 L467.7,315.0ZM489.0,320.9 L487.1,322.5 L486.6,322.9 L486.0,323.1 L485.3,323.1 L484.5,323.1 L483.7,322.9 L482.9,322.5 L482.2,322.1 L481.5,321.6 L478.7,319.1 L483.4,317.5ZM378.5,331.0 L375.6,333.7 L374.9,334.3 L374.2,334.8 L373.3,335.1 L372.5,335.3 L371.7,335.3 L371.0,335.2 L370.4,334.9 L369.8,334.5 L367.9,332.6 L373.5,329.0ZM395.2,329.3 L392.3,332.0 L391.6,332.5 L390.7,333.0 L389.9,333.3 L389.0,333.4 L388.1,333.4 L387.3,333.3 L386.6,333.0 L386.0,332.5 L383.7,330.4 L389.7,326.9ZM412.8,328.2 L409.9,330.9 L409.2,331.4 L408.4,331.9 L407.5,332.1 L406.6,332.3 L405.6,332.2 L404.8,332.0 L404.0,331.7 L403.3,331.2 L400.8,328.9 L407.0,325.5ZM430.9,327.9 L428.1,330.4 L427.4,331.0 L426.6,331.4 L425.7,331.6 L424.7,331.7 L423.8,331.7 L422.9,331.4 L422.1,331.0 L421.4,330.5 L418.7,328.1 L424.8,324.9ZM449.1,328.3 L446.4,330.7 L445.7,331.2 L444.9,331.6 L444.0,331.8 L443.1,331.8 L442.1,331.7 L441.2,331.5 L440.4,331.1 L439.7,330.5 L436.8,328.0 L442.8,325.1ZM466.7,329.3 L464.2,331.6 L463.6,332.1 L462.8,332.4 L462.0,332.6 L461.1,332.6 L460.2,332.5 L459.3,332.2 L458.5,331.7 L457.7,331.2 L454.8,328.5 L460.5,325.9ZM483.4,331.1 L481.2,333.2 L480.6,333.6 L479.9,333.9 L479.1,334.0 L478.3,334.0 L477.4,333.9 L476.6,333.5 L475.8,333.1 L475.1,332.5 L472.2,329.8 L477.5,327.6ZM498.7,333.6 L496.8,335.4 L496.3,335.8 L495.7,336.0 L495.0,336.1 L494.3,336.1 L493.5,335.9 L492.7,335.6 L491.9,335.1 L491.3,334.5 L488.5,331.8 L493.2,329.9ZM385.3,343.2 L382.4,346.0 L381.7,346.6 L380.9,347.1 L380.0,347.4 L379.2,347.5 L378.3,347.5 L377.5,347.3 L376.8,347.0 L376.2,346.5 L373.9,344.2 L379.9,340.5ZM403.1,342.2 L400.1,345.0 L399.4,345.6 L398.5,346.1 L397.6,346.4 L396.7,346.5 L395.8,346.4 L394.9,346.2 L394.2,345.8 L393.5,345.3 L390.9,342.8 L397.2,339.3ZM421.6,341.7 L418.6,344.5 L417.9,345.0 L417.0,345.5 L416.1,345.8 L415.2,345.9 L414.2,345.8 L413.3,345.6 L412.5,345.2 L411.8,344.6 L409.0,342.0 L415.4,338.5ZM440.3,341.7 L437.5,344.4 L436.7,345.0 L435.9,345.4 L435.0,345.7 L434.0,345.7 L433.0,345.6 L432.1,345.4 L431.3,344.9 L430.5,344.4 L427.6,341.6 L434.0,338.3ZM458.8,342.2 L456.1,344.8 L455.4,345.4 L454.6,345.8 L453.7,346.0 L452.8,346.0 L451.8,345.9 L450.9,345.6 L450.0,345.2 L449.3,344.6 L446.3,341.8 L452.5,338.7ZM476.5,343.3 L474.1,345.7 L473.4,346.2 L472.7,346.6 L471.8,346.8 L470.9,346.8 L470.0,346.7 L469.1,346.4 L468.3,345.9 L467.6,345.3 L464.6,342.5 L470.4,339.7ZM493.1,344.8 L490.9,347.1 L490.4,347.5 L489.7,347.9 L488.9,348.0 L488.1,348.0 L487.2,347.9 L486.4,347.6 L485.6,347.1 L484.9,346.5 L482.0,343.7 L487.3,341.2ZM375.7,357.7 L372.9,360.5 L372.2,361.1 L371.4,361.6 L370.6,361.9 L369.7,362.0 L368.9,362.0 L368.1,361.8 L367.4,361.4 L366.8,360.9 L364.5,358.4 L370.2,354.8ZM393.3,356.9 L390.4,359.8 L389.6,360.4 L388.8,360.9 L387.9,361.2 L387.0,361.3 L386.1,361.3 L385.2,361.0 L384.5,360.6 L383.8,360.1 L381.2,357.4 L387.4,353.8ZM411.9,356.5 L408.9,359.4 L408.1,360.0 L407.3,360.5 L406.4,360.7 L405.4,360.9 L404.4,360.8 L403.5,360.5 L402.7,360.1 L402.0,359.5 L399.2,356.8 L405.6,353.1ZM431.0,356.3 L428.0,359.2 L427.2,359.8 L426.4,360.3 L425.4,360.6 L424.5,360.6 L423.5,360.6 L422.5,360.3 L421.7,359.8 L420.9,359.2 L418.0,356.4 L424.5,352.9ZM450.0,356.5 L447.2,359.3 L446.4,359.9 L445.6,360.3 L444.6,360.6 L443.7,360.7 L442.7,360.6 L441.8,360.3 L440.9,359.9 L440.1,359.2 L437.1,356.3 L443.6,352.9ZM468.6,357.0 L465.9,359.7 L465.2,360.3 L464.4,360.7 L463.5,360.9 L462.5,361.0 L461.6,360.9 L460.7,360.6 L459.8,360.1 L459.1,359.5 L456.1,356.6 L462.3,353.3ZM486.2,357.7 L483.7,360.3 L483.1,360.9 L482.3,361.3 L481.5,361.5 L480.6,361.5 L479.7,361.4 L478.8,361.1 L478.0,360.7 L477.3,360.1 L474.4,357.2 L480.2,354.1ZM502.3,358.8 L500.1,361.2 L499.6,361.7 L498.9,362.1 L498.1,362.3 L497.3,362.3 L496.5,362.2 L495.7,361.9 L495.0,361.5 L494.3,360.9 L491.6,358.1 L496.8,355.3ZM383.8,371.9 L381.0,374.8 L380.3,375.4 L379.5,375.8 L378.7,376.1 L377.8,376.2 L376.9,376.1 L376.1,375.8 L375.3,375.4 L374.6,374.8 L372.0,372.1 L377.9,368.6ZM402.2,371.7 L399.3,374.6 L398.5,375.3 L397.7,375.7 L396.8,376.0 L395.8,376.1 L394.9,376.0 L394.0,375.7 L393.1,375.3 L392.4,374.7 L389.6,371.9 L395.9,368.3ZM421.3,371.6 L418.3,374.6 L417.5,375.2 L416.7,375.7 L415.7,375.9 L414.7,376.0 L413.8,375.9 L412.8,375.7 L412.0,375.2 L411.2,374.6 L408.3,371.7 L414.8,368.1ZM440.6,371.6 L437.7,374.6 L436.9,375.2 L436.0,375.6 L435.1,375.9 L434.1,376.0 L433.1,375.9 L432.2,375.6 L431.3,375.2 L430.5,374.6 L427.5,371.6 L434.1,368.0ZM459.7,371.7 L456.8,374.6 L456.1,375.2 L455.3,375.7 L454.3,376.0 L453.4,376.1 L452.4,376.0 L451.5,375.7 L450.6,375.2 L449.8,374.6 L446.9,371.7 L453.3,368.1ZM478.1,371.9 L475.3,374.7 L474.6,375.3 L473.8,375.8 L472.9,376.0 L472.0,376.1 L471.1,376.0 L470.2,375.7 L469.4,375.3 L468.6,374.7 L465.8,371.8 L471.9,368.4ZM495.2,372.2 L492.7,374.9 L492.0,375.5 L491.3,375.9 L490.5,376.1 L489.6,376.2 L488.8,376.1 L487.9,375.9 L487.1,375.4 L486.5,374.8 L483.7,372.0 L489.5,368.8ZM375.1,386.6 L372.5,389.3 L371.9,389.8 L371.1,390.2 L370.3,390.5 L369.5,390.5 L368.6,390.4 L367.8,390.1 L367.1,389.7 L366.4,389.1 L363.8,386.3 L369.3,383.1ZM392.9,386.9 L390.1,389.7 L389.4,390.3 L388.6,390.7 L387.7,390.9 L386.8,391.0 L385.9,390.9 L385.0,390.6 L384.2,390.2 L383.5,389.5 L380.7,386.7 L386.7,383.3ZM411.7,387.0 L408.8,389.9 L408.0,390.5 L407.2,391.0 L406.3,391.2 L405.3,391.3 L404.3,391.2 L403.4,390.9 L402.6,390.5 L401.8,389.9 L398.9,386.9 L405.2,383.4ZM431.0,387.1 L428.0,390.0 L427.2,390.6 L426.3,391.1 L425.4,391.4 L424.4,391.5 L423.4,391.4 L422.5,391.1 L421.6,390.6 L420.9,390.0 L417.9,387.1 L424.4,383.5ZM450.2,387.0 L447.3,390.0 L446.5,390.6 L445.6,391.1 L444.7,391.3 L443.7,391.4 L442.7,391.3 L441.8,391.1 L440.9,390.6 L440.2,390.0 L437.2,387.1 L443.8,383.5ZM469.0,386.9 L466.1,389.8 L465.4,390.4 L464.5,390.8 L463.6,391.1 L462.7,391.2 L461.7,391.2 L460.8,390.9 L460.0,390.5 L459.3,389.9 L456.4,387.0 L462.8,383.4ZM486.8,386.6 L484.0,389.4 L483.3,390.0 L482.5,390.4 L481.7,390.7 L480.8,390.8 L479.9,390.8 L479.1,390.5 L478.3,390.1 L477.6,389.6 L474.9,386.8 L481.0,383.3ZM384.4,401.3 L381.8,403.9 L381.2,404.4 L380.4,404.8 L379.6,405.0 L378.7,405.0 L377.9,404.8 L377.0,404.5 L376.2,404.1 L375.5,403.5 L372.7,400.7 L378.3,397.7ZM402.5,401.9 L399.8,404.6 L399.1,405.2 L398.3,405.6 L397.4,405.8 L396.5,405.9 L395.5,405.7 L394.6,405.5 L393.8,405.0 L393.0,404.4 L390.1,401.5 L396.1,398.4ZM421.4,402.3 L418.5,405.1 L417.8,405.6 L416.9,406.0 L416.0,406.3 L415.0,406.4 L414.1,406.3 L413.2,406.0 L412.3,405.5 L411.5,404.9 L408.6,402.1 L414.9,398.7ZM440.5,402.3 L437.5,405.1 L436.8,405.7 L435.9,406.1 L435.0,406.4 L434.0,406.5 L433.1,406.4 L432.1,406.1 L431.3,405.7 L430.5,405.1 L427.6,402.3 L434.1,398.8ZM459.4,401.9 L456.4,404.8 L455.7,405.4 L454.8,405.8 L453.9,406.1 L452.9,406.2 L452.0,406.2 L451.1,405.9 L450.3,405.5 L449.5,404.9 L446.7,402.2 L453.1,398.6ZM477.5,401.3 L474.6,404.1 L473.9,404.7 L473.1,405.2 L472.2,405.5 L471.3,405.6 L470.4,405.6 L469.5,405.3 L468.7,404.9 L468.0,404.4 L465.3,401.8 L471.6,398.2ZM494.4,400.3 L491.7,403.1 L491.0,403.7 L490.2,404.1 L489.4,404.4 L488.5,404.6 L487.7,404.6 L486.9,404.4 L486.2,404.0 L485.6,403.5 L483.1,401.0 L489.1,397.4ZM376.9,414.4 L374.6,416.6 L374.1,417.0 L373.4,417.3 L372.6,417.5 L371.8,417.4 L371.0,417.3 L370.2,416.9 L369.4,416.5 L368.8,415.9 L366.0,413.2 L371.0,410.8ZM394.1,415.7 L391.6,418.1 L391.0,418.5 L390.2,418.9 L389.4,419.0 L388.5,419.1 L387.6,418.9 L386.8,418.6 L385.9,418.2 L385.2,417.6 L382.3,414.9 L387.9,412.2ZM412.3,416.5 L409.6,419.0 L408.9,419.5 L408.1,419.9 L407.2,420.1 L406.3,420.1 L405.3,420.0 L404.4,419.7 L403.6,419.3 L402.9,418.7 L399.9,416.0 L405.9,413.0ZM431.0,416.7 L428.1,419.3 L427.3,419.9 L426.5,420.3 L425.6,420.5 L424.7,420.6 L423.7,420.5 L422.8,420.2 L422.0,419.8 L421.2,419.3 L418.3,416.6 L424.6,413.4ZM449.6,416.4 L446.7,419.1 L445.9,419.7 L445.1,420.1 L444.2,420.4 L443.2,420.5 L442.3,420.4 L441.4,420.2 L440.6,419.8 L439.8,419.3 L437.0,416.7 L443.4,413.3ZM467.7,415.7 L464.8,418.4 L464.1,418.9 L463.2,419.4 L462.4,419.7 L461.4,419.8 L460.5,419.8 L459.7,419.6 L458.9,419.2 L458.2,418.7 L455.5,416.2 L461.9,412.8ZM484.9,414.3 L482.1,417.0 L481.4,417.6 L480.6,418.1 L479.7,418.4 L478.9,418.5 L478.0,418.5 L477.2,418.4 L476.5,418.1 L475.9,417.6 L473.4,415.3 L479.5,411.7ZM500.7,412.5 L498.0,415.2 L497.3,415.7 L496.6,416.2 L495.8,416.5 L495.0,416.7 L494.3,416.7 L493.5,416.6 L492.9,416.3 L492.3,415.9 L490.2,413.8 L495.9,410.2ZM370.6,425.6 L368.6,427.3 L368.1,427.7 L367.5,427.9 L366.8,427.9 L366.1,427.8 L365.3,427.6 L364.6,427.3 L363.9,426.8 L363.2,426.3 L360.6,423.8 L365.0,422.1ZM386.7,427.7 L384.4,429.6 L383.8,430.0 L383.1,430.3 L382.4,430.4 L381.6,430.3 L380.7,430.2 L379.9,429.8 L379.1,429.4 L378.4,428.9 L375.6,426.4 L380.7,424.3ZM403.9,429.1 L401.4,431.2 L400.8,431.6 L400.0,431.9 L399.2,432.1 L398.3,432.1 L397.4,431.9 L396.6,431.7 L395.8,431.2 L395.0,430.7 L392.2,428.2 L397.8,425.8ZM421.9,429.8 L419.1,432.0 L418.4,432.5 L417.7,432.8 L416.8,433.0 L415.9,433.1 L415.0,433.0 L414.1,432.7 L413.3,432.3 L412.5,431.8 L409.7,429.4 L415.6,426.7ZM440.0,429.8 L437.2,432.1 L436.5,432.6 L435.6,433.0 L434.8,433.2 L433.8,433.3 L432.9,433.2 L432.1,433.0 L431.2,432.7 L430.5,432.2 L427.7,429.9 L433.9,426.9ZM457.9,429.1 L455.0,431.5 L454.3,432.0 L453.5,432.4 L452.6,432.7 L451.7,432.8 L450.8,432.8 L450.0,432.6 L449.2,432.3 L448.5,431.8 L445.9,429.6 L452.1,426.5ZM475.1,427.6 L472.3,430.1 L471.6,430.7 L470.8,431.1 L469.9,431.4 L469.1,431.5 L468.2,431.5 L467.4,431.4 L466.7,431.1 L466.0,430.7 L463.6,428.7 L469.7,425.4ZM491.2,425.5 L488.4,428.0 L487.7,428.6 L487.0,429.0 L486.2,429.3 L485.4,429.5 L484.6,429.6 L483.9,429.5 L483.2,429.3 L482.6,428.9 L480.5,427.0 L486.3,423.6ZM380.2,437.5 L378.2,438.9 L377.7,439.2 L377.0,439.3 L376.3,439.3 L375.6,439.2 L374.8,439.0 L374.0,438.7 L373.3,438.3 L372.7,437.8 L370.0,435.6 L374.6,434.3ZM396.4,439.6 L394.1,441.2 L393.5,441.6 L392.8,441.8 L392.0,441.8 L391.2,441.8 L390.4,441.6 L389.5,441.3 L388.8,441.0 L388.1,440.5 L385.3,438.3 L390.5,436.6ZM413.4,440.9 L410.9,442.7 L410.2,443.1 L409.5,443.3 L408.7,443.4 L407.8,443.4 L407.0,443.3 L406.1,443.1 L405.3,442.7 L404.6,442.3 L401.8,440.1 L407.4,438.1ZM430.9,441.3 L428.2,443.3 L427.6,443.7 L426.8,443.9 L425.9,444.1 L425.0,444.2 L424.2,444.1 L423.3,443.9 L422.5,443.6 L421.8,443.2 L419.1,441.1 L424.9,438.8ZM448.4,440.9 L445.6,442.9 L444.9,443.4 L444.1,443.7 L443.3,443.9 L442.4,444.0 L441.5,444.0 L440.7,443.8 L439.9,443.5 L439.3,443.2 L436.6,441.3 L442.6,438.6ZM465.4,439.6 L462.7,441.7 L461.9,442.2 L461.2,442.5 L460.3,442.8 L459.5,442.9 L458.6,443.0 L457.8,442.8 L457.1,442.6 L456.5,442.3 L454.0,440.5 L460.0,437.7ZM481.6,437.4 L478.8,439.6 L478.1,440.1 L477.4,440.5 L476.6,440.8 L475.8,441.0 L475.0,441.0 L474.2,441.0 L473.6,440.8 L473.0,440.5 L470.8,439.0 L476.6,435.9ZM496.4,434.4 L493.8,436.6 L493.1,437.1 L492.4,437.5 L491.7,437.9 L490.9,438.1 L490.2,438.2 L489.5,438.2 L488.9,438.1 L488.4,437.8 L486.5,436.5 L492.0,433.2ZM374.6,444.7 L372.7,445.5 L372.2,445.6 L371.7,445.7 L371.0,445.6 L370.3,445.5 L369.6,445.2 L368.9,444.9 L368.3,444.5 L367.6,444.1 L365.2,442.1 L369.3,441.7ZM389.6,447.6 L387.5,448.7 L386.9,448.9 L386.3,449.0 L385.5,449.0 L384.8,448.9 L384.0,448.7 L383.2,448.4 L382.5,448.0 L381.9,447.6 L379.3,445.7 L384.0,444.9ZM405.7,449.6 L403.3,450.8 L402.7,451.1 L402.0,451.2 L401.2,451.3 L400.4,451.2 L399.6,451.1 L398.8,450.9 L398.0,450.5 L397.4,450.2 L394.7,448.4 L399.9,447.1ZM422.4,450.6 L419.9,452.0 L419.2,452.3 L418.5,452.5 L417.7,452.6 L416.8,452.6 L416.0,452.5 L415.2,452.3 L414.4,452.0 L413.7,451.7 L411.0,450.0 L416.6,448.4ZM439.4,450.5 L436.7,452.1 L436.1,452.5 L435.3,452.7 L434.5,452.8 L433.6,452.9 L432.8,452.9 L432.0,452.7 L431.2,452.5 L430.5,452.2 L427.9,450.7 L433.7,448.7ZM456.1,449.5 L453.4,451.3 L452.8,451.6 L452.0,451.9 L451.2,452.1 L450.3,452.2 L449.5,452.2 L448.7,452.1 L448.0,452.0 L447.3,451.7 L444.8,450.3 L450.7,448.0ZM472.2,447.5 L469.5,449.4 L468.9,449.8 L468.1,450.1 L467.3,450.3 L466.5,450.5 L465.7,450.6 L465.0,450.5 L464.3,450.4 L463.7,450.2 L461.4,449.0 L467.1,446.4ZM487.2,444.5 L484.6,446.5 L484.0,446.9 L483.3,447.3 L482.5,447.5 L481.8,447.8 L481.1,447.9 L480.4,447.9 L479.7,447.8 L479.2,447.7 L477.2,446.7 L482.7,443.8ZM383.3,452.8 L381.3,453.3 L380.8,453.3 L380.2,453.3 L379.5,453.2 L378.8,453.1 L378.1,452.8 L377.4,452.6 L376.7,452.3 L376.1,451.9 L373.7,450.4 L378.1,450.4ZM398.5,455.5 L396.2,456.2 L395.7,456.3 L395.0,456.3 L394.3,456.3 L393.5,456.2 L392.7,456.0 L392.0,455.8 L391.3,455.5 L390.6,455.2 L388.1,453.8 L393.0,453.4ZM414.5,457.1 L412.1,458.0 L411.5,458.1 L410.7,458.2 L410.0,458.2 L409.2,458.2 L408.3,458.1 L407.6,457.9 L406.8,457.7 L406.2,457.4 L403.6,456.2 L408.9,455.3ZM430.9,457.6 L428.4,458.7 L427.7,458.9 L427.0,459.0 L426.2,459.1 L425.4,459.1 L424.5,459.1 L423.7,458.9 L423.0,458.8 L422.3,458.5 L419.8,457.4 L425.3,456.2ZM447.3,457.1 L444.7,458.3 L444.1,458.5 L443.3,458.7 L442.5,458.8 L441.7,458.9 L440.9,458.9 L440.1,458.8 L439.4,458.7 L438.7,458.5 L436.2,457.6 L441.9,456.0ZM463.3,455.4 L460.7,456.8 L460.1,457.0 L459.4,457.3 L458.6,457.5 L457.8,457.6 L457.0,457.7 L456.2,457.7 L455.5,457.6 L454.9,457.4 L452.5,456.7 L458.1,454.7ZM478.4,452.7 L475.9,454.2 L475.3,454.5 L474.6,454.8 L473.9,455.0 L473.1,455.2 L472.4,455.3 L471.7,455.4 L471.0,455.3 L470.5,455.2 L468.3,454.7 L473.7,452.4ZM492.3,448.9 L490.0,450.5 L489.4,450.8 L488.8,451.1 L488.1,451.4 L487.4,451.7 L486.7,451.8 L486.1,451.9 L485.5,452.0 L485.0,451.9 L483.1,451.6 L488.1,449.0ZM377.3,455.0 L375.3,454.9 L374.8,454.8 L374.2,454.7 L373.6,454.5 L372.9,454.3 L372.3,454.0 L371.6,453.8 L371.0,453.5 L370.5,453.2 L368.3,452.1 L372.5,452.9ZM391.6,458.5 L389.4,458.5 L388.8,458.5 L388.2,458.4 L387.5,458.3 L386.8,458.1 L386.0,457.9 L385.3,457.7 L384.6,457.5 L384.1,457.3 L381.8,456.3 L386.4,456.7ZM406.9,460.7 L404.5,461.0 L403.9,461.0 L403.3,460.9 L402.5,460.9 L401.7,460.8 L400.9,460.7 L400.2,460.5 L399.5,460.4 L398.9,460.2 L396.4,459.3 L401.5,459.3ZM422.8,461.8 L420.4,462.3 L419.7,462.3 L419.0,462.4 L418.3,462.4 L417.4,462.3 L416.6,462.3 L415.8,462.2 L415.1,462.1 L414.5,461.9 L412.0,461.2 L417.3,460.8ZM439.0,461.8 L436.5,462.4 L435.8,462.5 L435.1,462.6 L434.3,462.7 L433.5,462.7 L432.7,462.7 L431.9,462.7 L431.2,462.6 L430.5,462.5 L428.0,462.0 L433.5,461.2ZM454.9,460.7 L452.4,461.4 L451.8,461.6 L451.1,461.7 L450.3,461.8 L449.5,461.9 L448.7,462.0 L447.9,462.0 L447.2,462.0 L446.6,461.9 L444.2,461.6 L449.6,460.4ZM470.2,458.3 L467.8,459.3 L467.2,459.5 L466.5,459.7 L465.8,459.8 L465.0,460.0 L464.2,460.1 L463.5,460.2 L462.8,460.2 L462.2,460.2 L459.9,460.0 L465.2,458.5ZM484.5,454.9 L482.2,456.0 L481.6,456.2 L481.0,456.4 L480.3,456.7 L479.6,456.9 L478.9,457.0 L478.2,457.2 L477.6,457.3 L477.0,457.3 L474.9,457.4 L479.9,455.5ZM497.3,450.3 L495.3,451.5 L494.8,451.8 L494.2,452.1 L493.6,452.3 L492.9,452.6 L492.3,452.8 L491.7,453.0 L491.1,453.2 L490.6,453.3 L488.8,453.5 L493.4,451.3ZM371.0,454.1 L369.0,453.4 L368.5,453.2 L368.0,453.0 L367.4,452.7 L366.7,452.5 L366.1,452.2 L365.5,452.0 L365.0,451.7 L364.5,451.5 L362.7,450.7 L366.7,452.5ZM384.6,458.2 L382.4,457.6 L381.8,457.5 L381.2,457.3 L380.5,457.1 L379.8,456.9 L379.1,456.7 L378.5,456.5 L377.8,456.3 L377.3,456.2 L375.2,455.5 L379.8,456.9ZM399.3,461.0 L397.0,460.7 L396.4,460.6 L395.7,460.5 L395.0,460.3 L394.2,460.2 L393.5,460.1 L392.7,459.9 L392.1,459.8 L391.5,459.7 L389.2,459.2 L394.2,460.2ZM462.4,461.0 L460.1,461.3 L459.5,461.4 L458.8,461.5 L458.0,461.6 L457.2,461.7 L456.5,461.8 L455.7,461.9 L455.0,462.0 L454.4,462.0 L452.0,462.3 L457.2,461.7ZM477.2,458.0 L475.0,458.6 L474.4,458.7 L473.7,458.8 L473.0,459.0 L472.3,459.1 L471.6,459.3 L470.8,459.5 L470.2,459.6 L469.6,459.7 L467.3,460.1 L472.3,459.1ZM490.7,453.9 L488.7,454.6 L488.2,454.8 L487.6,455.0 L486.9,455.2 L486.3,455.4 L485.6,455.7 L484.9,455.9 L484.3,456.0 L483.8,456.2 L481.7,456.8 L486.3,455.4ZM377.6,456.3 L375.5,455.6 L375.0,455.5 L374.4,455.3 L373.8,455.1 L373.1,454.8 L372.4,454.6 L371.8,454.4 L371.2,454.2 L370.7,454.0 L368.8,453.3 L373.1,454.8ZM391.8,459.7 L389.6,459.3 L389.0,459.2 L388.3,459.0 L387.6,458.9 L386.9,458.7 L386.2,458.5 L385.5,458.4 L384.8,458.2 L384.3,458.1 L382.1,457.5 L386.9,458.7ZM407.1,462.1 L404.7,461.8 L404.0,461.7 L403.3,461.6 L402.6,461.5 L401.8,461.4 L401.0,461.3 L400.3,461.2 L399.6,461.1 L399.0,461.0 L396.7,460.6 L401.8,461.4ZM469.9,459.6 L467.6,460.1 L467.1,460.2 L466.4,460.3 L465.6,460.4 L464.9,460.6 L464.1,460.7 L463.4,460.8 L462.7,460.9 L462.1,461.0 L459.7,461.4 L464.9,460.6ZM484.1,456.1 L482.0,456.7 L481.4,456.9 L480.8,457.1 L480.1,457.2 L479.4,457.4 L478.7,457.6 L478.0,457.8 L477.4,458.0 L476.8,458.1 L474.6,458.6 L479.4,457.4ZM496.9,451.4 L495.0,452.2 L494.5,452.4 L494.0,452.7 L493.4,452.9 L492.7,453.1 L492.1,453.4 L491.5,453.6 L490.9,453.8 L490.4,454.0 L488.4,454.7 L492.7,453.1Z"/></g></svg>
<span class="t" style="left:490.2px;top:365.5px;font-size:26px;font-family:'Liberation Sans','Noto Sans CJK SC',sans-serif;font-weight:bold;color:#fff;text-shadow:1.3px 1.3px 1.2px rgba(60,60,60,.85),0 0 1.2px rgba(100,100,100,.75);transform:scaleX(1.068);line-height:37px;opacity:.995">软件自学网</span>
<span class="t" style="left:491.4px;top:396px;font-size:8.4px;font-weight:bold;color:#fff;letter-spacing:1.62px;text-shadow:0.7px 0.9px 0.9px rgba(70,70,70,.85),0 0 0.9px rgba(110,110,110,.7);transform:scaleX(1.43);line-height:12px;opacity:.995">WWW.RJZXW.COM</span>
<div class="abs" style="left:0;top:41.4px;width:46.2px;height:436px;background:#535353"></div>
<div class="abs" style="left:0;top:41.4px;width:46.2px;height:8px;background:#454545"></div>
<div class="abs" style="left:46.2px;top:41.4px;width:2.2px;height:436px;background:#3b3b3b"></div>
<svg width="650" height="477" viewBox="0 0 650 477"><path d="M10.70,52.5v2.5M12.68,52.5v2.5M14.66,52.5v2.5M16.64,52.5v2.5M18.62,52.5v2.5M20.60,52.5v2.5M22.58,52.5v2.5M24.56,52.5v2.5" stroke="#3c3c3c" stroke-width="1.2"/><path d="M0,43.4l1.2,1.3l-1.2,1.3" stroke="#cfcfcf" stroke-width="0.8" fill="none"/></svg>
<svg width="650" height="477" viewBox="0 0 650 477" fill="none" stroke-linejoin="round" stroke-linecap="round">
<g stroke="#d2d2d2" stroke-width="1.1">
<!-- separators -->
<g stroke="#5f5f5f" stroke-width="1" stroke-linecap="butt">
<path d="M0,101.5H42 M0,180.5H42 M0,240.5H42 M0,281.5H42 M0,303.5H42 M0,344.5H42"/>
</g>
<!-- corner flyout triangles -->
<g fill="#d0d0d0" stroke="none">
<path d="M41,77v3h-3z M17.2,118v3h-3z M17.2,136.5v3h-3z M41,136.5v3h-3z M17.2,155v3h-3z M41,155v3h-3z M17.2,174v3h-3z M41,174v3h-3z M17.2,196.8v3h-3z M41,196.8v3h-3z M17.2,215.2v3h-3z M41,215.2v3h-3z M17.2,234.4v3h-3z M41,234.4v3h-3z M17.2,275.2v3h-3z M17.2,297.6v3h-3z M41,297.6v3h-3z M41,320.2v3h-3z M17.2,338.6v3h-3z"/>
</g>
<!-- row1: selection / direct selection -->
<rect x="-3" y="62.9" width="20.6" height="16.8" rx="2" fill="#383838" stroke="none"/>
<path d="M3.3,65.7 L12.4,74.2 L7.2,75 L3.3,78.4 Z" stroke-width="1.15"/>
<path d="M26.2,65.2 L36.2,74.7 L30.3,75.4 L26.2,78.8 Z" fill="#c9c9c9" stroke="none"/>
<!-- row2: magic wand / lasso -->
<path d="M1.4,96.4 L9.2,88.6" stroke-width="1.7" stroke-linecap="butt"/>
<path d="M4,85.4v3.8M2.1,87.3h3.8 M10.9,84v4.2M8.8,86.1h4.2" stroke-width="0.75"/>
<path d="M3.2,86.5l1.6,1.6M4.8,86.5l-1.6,1.6 M10,85.2l1.8,1.8M11.8,85.2l-1.8,1.8" stroke-width="0.5"/>
<circle cx="11.8" cy="90.7" r="0.8" fill="#d2d2d2" stroke="none"/>
<ellipse cx="30.6" cy="88.5" rx="6.2" ry="3.3" stroke-width="1.35"/>
<path d="M27,91.3 c1.6,0.6 1.8,2.4 0.4,3 c-1.2,0.4 -1.8,-1.2 -0.4,-1.8 M27.6,94.2 c0.2,1 -0.2,2 -1,2.6" stroke-width="1.1"/>
<path d="M30.5,87.6 L38,93.8 L33.6,94.3 L30.5,97.5 Z" fill="#c9c9c9" stroke="#535353" stroke-width="0.5"/>
<!-- row3: pen / curvature -->
<g id="pen">
<path d="M0.9,118.2 C1.2,115 2,112.4 3,110.8 L7.3,108.9 L11.1,112.7 L9.2,117 C7,117.8 3.6,118.2 0.9,118.2 Z" fill="#cbcbcb" stroke="none"/>
<path d="M8.1,108.3 L10,106.3 L13.5,109.9 L11.6,111.9 Z" fill="#cbcbcb" stroke="none"/>
<path d="M1.3,117.8 L5.6,113.7" stroke="#535353" stroke-width="0.6"/>
<circle cx="6" cy="113.3" r="0.75" fill="#535353" stroke="none"/>
</g>
<g transform="translate(25,0)">
<path d="M0.9,118.2 C1.2,115 2,112.4 3,110.8 L7.3,108.9 L11.1,112.7 L9.2,117 C7,117.8 3.6,118.2 0.9,118.2 Z" fill="#cbcbcb" stroke="none"/>
<path d="M8.1,108.3 L10,106.3 L13.5,109.9 L11.6,111.9 Z" fill="#cbcbcb" stroke="none"/>
<path d="M1.3,117.8 L5.6,113.7" stroke="#535353" stroke-width="0.6"/>
<circle cx="6" cy="113.3" r="0.75" fill="#535353" stroke="none"/>
</g>
<path d="M23.4,107.4 C26.5,109.5 24.5,112 23,114.5 C21.8,117 23.5,118.6 26,118" stroke-width="0.9"/>
<!-- row4: type / line -->
<text x="1.2" y="136.9" font-family="DejaVu Serif,Liberation Serif,serif" font-weight="bold" font-size="14.2" fill="#d2d2d2" stroke="none" style="filter:grayscale(1)" textLength="11.2" lengthAdjust="spacingAndGlyphs">T</text>
<path d="M24.8,136.4 L35.9,126.1" stroke-width="1.3"/>
<!-- row5: ellipse / brush -->
<ellipse cx="7.1" cy="149.9" rx="6.3" ry="5.2" fill="#727272" stroke-width="1.1"/>
<path d="M36.9,144.4 L35.6,143.3 L28.8,150 L31,152.2 Z" fill="#cbcbcb" stroke="none"/>
<path d="M28.2,150.6 C30.6,150.8 31.8,152.8 30.8,154.6 C29.4,156.6 26.4,156.2 24.2,156.2 C26,154.8 25.2,151.6 28.2,150.6 Z" fill="#cbcbcb" stroke="none"/>
<!-- row6: shaper / eraser -->
<circle cx="3.6" cy="168" r="4.3" fill="#6e6e6e" stroke-width="1"/>
<path d="M14.6,163.8 L16.4,165.6 L7,175 L4.6,175.4 L5.2,173.2 Z" fill="#c9c9c9" stroke="#535353" stroke-width="0.5"/>
<path d="M31.5,162 L37.3,167.7 L31.4,172.8 L26.4,167.4 Z" fill="#cbcbcb" stroke="none"/>
<path d="M26.4,167.4 L24,170.2 L28.5,175.1 L31.4,172.8" stroke-width="1"/>
<!-- row7: rotate / scale -->
<path d="M3,188.6 A5.5,5.5 0 0 1 12.6,191.6" stroke-width="1.2"/>
<path d="M12.6,191.7 A5.5,5.5 0 0 1 1.8,193.2" stroke-width="1.1" stroke-dasharray="0.9 1.5"/>
<path d="M0.8,186.6 L5.4,188.6 L1.4,191.4 Z" fill="#d0d0d0" stroke="none"/>
<rect x="26.8" y="185.6" width="10" height="9.2" stroke-width="1"/>
<rect x="23.5" y="191" width="6.6" height="6.4" stroke-width="1"/>
<path d="M32,191.6 L35.4,187.6 M33.2,187.2 L35.8,187.2 L35.8,189.6" stroke-width="0.9"/>
<!-- row8: width / pin -->
<path d="M0,214.1 L2.2,213.6 C4.2,213 3.6,210.4 2.7,208.4 C1.8,206.2 3.4,204.9 4.7,206.4 C6.2,208.4 5.4,213 8.6,212.5 C11.2,212 10.6,208.3 12.6,208.4 C14.2,208.6 14.2,210.8 13.8,212.3 M8.2,209.6 L9.2,205.8" stroke-width="2"/>
<circle cx="4.5" cy="210.4" r="0.9" fill="#777" stroke="#8a8a8a" stroke-width="0.5"/>
<path d="M30.4,204 L35.6,209.4 L33.6,210 L33.2,212 L31.2,214 L26.6,209.2 L28.6,207.2 L30.2,206.6 Z" fill="#cbcbcb" stroke="none"/>
<path d="M28.6,211.2 L23.7,215.2" stroke-width="1.3"/>
<!-- row9: shape builder / perspective grid -->
<circle cx="4.2" cy="227.6" r="3.4" stroke-width="0.9"/>
<circle cx="8.2" cy="226.4" r="4.3" stroke-width="0.9"/>
<path d="M9.2,227 L15.6,233.5 L11.8,233.6 L9.2,235.6 Z" fill="#c9c9c9" stroke="#535353" stroke-width="0.5"/>
<path d="M23.6,222.6 V234.8 L32.2,228.4 V225.4 Z M23.6,228.6 L32.2,227 M26.6,223.6 V232.6 M29.4,224.5 V230.4 M23.6,225.6 L32.2,226.2" stroke-width="0.8"/>
<path d="M23.6,234.9 H37" stroke-width="0.9"/>
<path d="M27.6,232.6 H35 M30.6,230.4 H33.8" stroke="#9a9a9a" stroke-width="0.8"/>
<!-- row10: mesh / gradient -->
<rect x="1.6" y="246.3" width="11.2" height="10.6" stroke-width="1"/>
<path d="M1.6,250 C5,251.5 8,248 12.8,249.6 M1.6,254 C5,255 9,251.6 12.8,253.4 M5.2,246.3 C7,250 3.8,253 5.6,256.9 M9.4,246.3 C11,250 7.6,253.4 9.6,256.9 M1.6,256.9 C4,253 6,251 7.4,246.3 M7,256.9 C8.6,254 11,252 12.8,251.4" stroke-width="0.75"/>
<defs><linearGradient id="gg" x1="0" x2="1" y1="0" y2="0"><stop offset="0" stop-color="#5e5e5e"/><stop offset="1" stop-color="#b4b4b4"/></linearGradient>
<linearGradient id="gw" x1="0" x2="1" y1="0" y2="0"><stop offset="0" stop-color="#fff"/><stop offset="1" stop-color="#2a1a10"/></linearGradient></defs>
<rect x="24.6" y="246.3" width="12" height="10.6" fill="url(#gg)" stroke-width="1.1"/>
<!-- row11: eyedropper / blend -->
<path d="M1,275.8 L2,273 L8.6,266.4 L10.6,268.4 L4,275 Z" stroke-width="0.9"/>
<path d="M8,265.8 L11.2,269 M9.4,267.2 L11.6,264.8 A1.3,1.3 0 0 1 13.2,266.6 L11,268.8" stroke-width="1.5" fill="#c9c9c9"/>
<rect x="23.2" y="264.8" width="5.6" height="5.8" fill="#c9c9c9" stroke="none"/>
<circle cx="29.8" cy="269.8" r="2.5" fill="#8a8a8a" stroke-width="0.9"/>
<circle cx="34.3" cy="272.3" r="2.8" fill="#535353" stroke-width="1"/>
<!-- row12: symbol sprayer / graph -->
<rect x="6.6" y="288.6" width="6.8" height="9.4" rx="1" stroke-width="1"/>
<rect x="8.6" y="286" width="3" height="2.2" fill="#c9c9c9" stroke="none"/>
<circle cx="10" cy="293.6" r="1.6" stroke-width="0.9"/>
<path d="M0.5,287.6h1 M2.6,287.6h1 M4.6,287.2h1 M0.5,289.6h1 M2.6,289.6h1 M1,291.8h1.6" stroke-width="1.1" stroke-linecap="butt"/>
<path d="M23.6,286.4 V297.5 H37.2" stroke-width="1"/>
<path d="M26,291.6h2.2v5.6h-2.2z M30.5,287h2.2v10.2h-2.2z M34.8,288.6h2.2v8.6h-2.2z" fill="#c9c9c9" stroke="none"/>
<!-- row13: artboard / slice -->
<path d="M3.6,312.9 H10.6 L12.9,315.1 V320.1 H3.6 Z" fill="#767676" stroke-width="0.9" stroke-linejoin="miter"/>
<path d="M3.6,308.2 V312.9 M0,312.9 H3.6" stroke-width="0.85" stroke-linecap="butt"/>
<path d="M32.8,311.4 L35.2,309.4 L37.4,311.8 L36.2,314.4 Z" fill="#cbcbcb" stroke-width="0.8"/>
<path d="M32.8,311.4 L24,320.9 L36.2,314.4" stroke-width="1"/>
<!-- row14: hand / zoom -->
<path transform="translate(7 335) scale(1.08 1.1) translate(-6.7 -335.4)" d="M4.6,340 C3.4,338 2,336.4 0.9,335.2 C0.6,334.2 1.8,333.8 2.6,334.6 L4,336 L3.2,331.6 C3.1,330.6 4.4,330.4 4.7,331.4 L5.6,334.4 L5.7,330.4 C5.8,329.4 7.1,329.4 7.2,330.4 L7.5,334.3 L8.6,330.8 C8.9,329.9 10.1,330.2 10,331.2 L9.5,334.8 L11.2,332.4 C11.8,331.6 12.8,332.2 12.4,333.2 C11.6,335.4 11.4,338 10.2,340 Z" fill="#cdcdcd" stroke="none"/>
<circle cx="28.4" cy="332.9" r="3.5" stroke-width="1.4"/>
<path d="M31.2,335.8 L36,339.8" stroke-width="2"/>
<!-- fill / stroke swatches -->
<rect x="10" y="363.2" width="27.1" height="26.7" fill="#fff" stroke="none"/>
<rect x="16.9" y="370.8" width="12.8" height="11.7" fill="#4a4a4a" stroke="none"/>
<path d="M10.4,389.6 L36.8,363.6" stroke="#f01010" stroke-width="1.6" stroke-linecap="butt"/>
<rect x="-2" y="349.8" width="24.5" height="25.4" rx="1.5" fill="#000" stroke="#cfcfcf" stroke-width="1.1"/>
<path d="M32,351.6 C35,351.6 36.2,353.4 36.2,356.4" stroke-width="1.2"/>
<path d="M30.2,351.6 L33,349.6 L33,353.6 Z M36.2,358.6 L34.2,355.8 L38.2,355.8 Z" fill="#d0d0d0" stroke="none"/>
<path d="M0,381.6 H2.6 V383 H4 V387.6 H0" stroke-width="0.9" fill="#535353"/>
<!-- color / gradient / none -->
<rect x="-2" y="395.8" width="11.8" height="15" fill="#3a3a3a" stroke="none"/>
<rect x="11.6" y="396.3" width="13.5" height="14" stroke="#5c5c5c" stroke-width="0.8"/>
<rect x="27" y="396.3" width="13.5" height="14" stroke="#5c5c5c" stroke-width="0.8"/>
<rect x="-2" y="398.9" width="10.2" height="9.1" fill="#000" stroke="none"/>
<rect x="13.7" y="399" width="9.4" height="9" fill="url(#gw)" stroke="#111" stroke-width="0.9"/>
<rect x="29.2" y="399" width="9" height="9" fill="#fff" stroke="#111" stroke-width="0.9"/>
<path d="M29.9,407.2 L37.5,399.8" stroke="#f01010" stroke-width="2.1" stroke-linecap="butt"/>
<!-- drawing modes -->
<rect x="-2" y="415.2" width="11.8" height="14" fill="#3a3a3a" stroke="none"/>
<rect x="11.6" y="415.6" width="13.5" height="13.4" stroke="#5c5c5c" stroke-width="0.8"/>
<rect x="27" y="415.6" width="13.5" height="13.4" stroke="#5c5c5c" stroke-width="0.8"/>
<circle cx="2.4" cy="421.4" r="2.4" stroke-width="1"/>
<rect x="2.8" y="422.4" width="4.2" height="4.2" fill="#d0d0d0" stroke="#3a3a3a" stroke-width="0.6"/>
<circle cx="17.6" cy="421.4" r="2.4" stroke-width="1" fill="#7a7a7a"/>
<rect x="18.6" y="422.6" width="4" height="4" fill="#d0d0d0" stroke="#535353" stroke-width="0.6"/>
<circle cx="33.3" cy="421.6" r="2.3" stroke="#6e6e6e" stroke-width="0.9"/>
<path d="M33.3,421.6 L34.8,420.4" stroke="#6e6e6e" stroke-width="0.8"/>
<!-- screen mode -->
<rect x="16.6" y="436.6" width="10.2" height="7.4" fill="#6a6a6a" stroke-width="1"/>
<path d="M16.6,437 H26.8" stroke-width="1.6" stroke-linecap="butt"/>
<rect x="10.6" y="440" width="10" height="7.2" fill="#6a6a6a" stroke-width="1"/>
<path d="M10.6,440.4 H20.6" stroke-width="1.6" stroke-linecap="butt"/>
</g>
</svg>

</div>
</body></html>
